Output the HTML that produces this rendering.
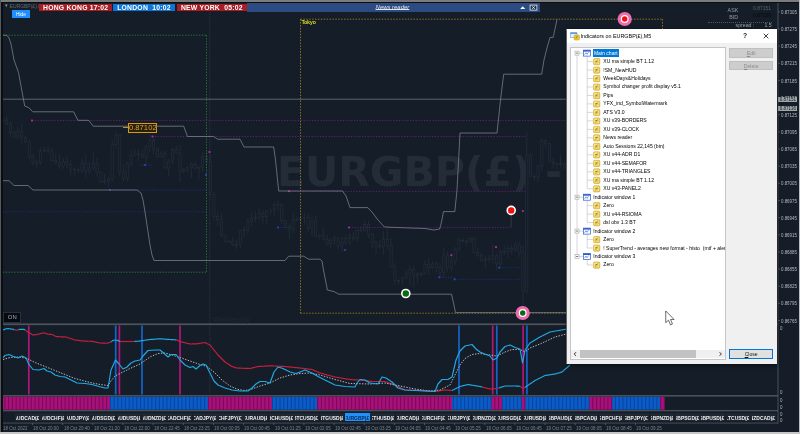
<!DOCTYPE html><html><head><meta charset="utf-8"><title>EURGBP chart</title><style>

html,body{margin:0;padding:0}
body{width:800px;height:434px;overflow:hidden;position:relative;background:#151e28;font-family:"Liberation Sans",sans-serif;color:#ccc}
.abs{position:absolute;white-space:nowrap;line-height:1}
svg.main{position:absolute;left:0;top:0}
.clock{position:absolute;top:3.7px;height:7.4px;color:#fff;font-weight:bold;font-size:6.8px;line-height:7.6px;text-align:center;white-space:pre;letter-spacing:0.22px}
.pl{position:absolute;left:780.7px;font-size:5px;transform:scaleX(0.88);transform-origin:0 0;color:#b4bac0;line-height:6px;height:6px;white-space:nowrap}
.tl{position:absolute;top:425.8px;font-size:4.8px;color:#7c848c;line-height:6px;white-space:nowrap;transform:scaleX(0.94);transform-origin:0 0}
.sym{position:absolute;top:412.8px;height:8.4px;width:24.9px;background:#1d2631;color:#f2f2f2;font-weight:bold;font-size:6.2px;line-height:9.2px;text-align:center;overflow:hidden;white-space:nowrap}
.sym i{position:absolute;left:1.2px;right:1.2px;top:0;bottom:0;overflow:hidden;font-style:normal}
.sym span{position:absolute;left:-20px;right:-20px;text-align:center;transform:scaleX(0.8)}
.dlg{position:absolute;left:567px;top:29px;width:210px;height:335px;background:#f0f0f0;box-shadow:0 1px 4px rgba(0,0,0,.6)}
.dlg .title{position:absolute;left:0;top:0;right:0;height:14.2px;background:#fff}
.tree{position:absolute;left:3px;top:18px;width:153.6px;height:310.6px;background:#fff;border:1px solid #c2c5ca;overflow:hidden}
.row{position:absolute;left:0;height:8.45px;line-height:8.45px;font-size:5.08px;color:#000;white-space:nowrap}
.btn{position:absolute;left:162.2px;width:44px;height:9.4px;font-size:5.08px;line-height:9.2px;text-align:center;box-sizing:border-box}

</style></head><body><div id="wrap" style="position:absolute;left:0;top:0;width:800px;height:434px;will-change:transform">
<svg class="main" width="800" height="434" viewBox="0 0 800 434">
<text x="277" y="186" font-family="DejaVu Sans, Liberation Sans, sans-serif" font-weight="bold" font-size="41" fill="#232c37">EURGBP(£) -</text>
<path d="M2.88 117.4V122.3" stroke="#25303c" stroke-width="0.7"/>
<rect x="1.78" y="120.0" width="2.2" height="0.9" fill="#151e28" stroke="#25303c" stroke-width="0.6"/>
<path d="M6.65 115.8V124.9" stroke="#25303c" stroke-width="0.7"/>
<rect x="5.55" y="120.0" width="2.2" height="3.6" fill="#151e28" stroke="#25303c" stroke-width="0.6"/>
<path d="M10.42 121.3V137.4" stroke="#25303c" stroke-width="0.7"/>
<rect x="9.32" y="123.5" width="2.2" height="9.2" fill="#151e28" stroke="#25303c" stroke-width="0.6"/>
<path d="M14.18 130.6V138.5" stroke="#25303c" stroke-width="0.7"/>
<rect x="13.08" y="132.7" width="2.2" height="4.5" fill="#151e28" stroke="#25303c" stroke-width="0.6"/>
<path d="M17.95 127.1V139.8" stroke="#25303c" stroke-width="0.7"/>
<rect x="16.85" y="131.1" width="2.2" height="6.2" fill="#151e28" stroke="#25303c" stroke-width="0.6"/>
<path d="M21.72 123.8V144.7" stroke="#25303c" stroke-width="0.7"/>
<rect x="20.62" y="131.1" width="2.2" height="6.2" fill="#151e28" stroke="#25303c" stroke-width="0.6"/>
<path d="M25.49 134.9V143.6" stroke="#25303c" stroke-width="0.7"/>
<rect x="24.39" y="137.2" width="2.2" height="4.6" fill="#151e28" stroke="#25303c" stroke-width="0.6"/>
<path d="M29.26 139.3V159.7" stroke="#25303c" stroke-width="0.7"/>
<rect x="28.16" y="141.9" width="2.2" height="14.8" fill="#151e28" stroke="#25303c" stroke-width="0.6"/>
<path d="M33.03 154.5V166.2" stroke="#25303c" stroke-width="0.7"/>
<rect x="31.93" y="156.6" width="2.2" height="6.4" fill="#151e28" stroke="#25303c" stroke-width="0.6"/>
<path d="M36.80 160.0V168.3" stroke="#25303c" stroke-width="0.7"/>
<rect x="35.70" y="162.7" width="2.2" height="0.8" fill="#151e28" stroke="#25303c" stroke-width="0.6"/>
<path d="M40.57 147.5V164.6" stroke="#25303c" stroke-width="0.7"/>
<rect x="39.47" y="151.0" width="2.2" height="11.7" fill="#151e28" stroke="#25303c" stroke-width="0.6"/>
<path d="M44.34 147.1V152.5" stroke="#25303c" stroke-width="0.7"/>
<rect x="43.24" y="150.1" width="2.2" height="0.9" fill="#151e28" stroke="#25303c" stroke-width="0.6"/>
<path d="M48.11 145.8V153.6" stroke="#25303c" stroke-width="0.7"/>
<rect x="47.01" y="150.1" width="2.2" height="0.9" fill="#151e28" stroke="#25303c" stroke-width="0.6"/>
<path d="M51.87 147.3V162.0" stroke="#25303c" stroke-width="0.7"/>
<rect x="50.77" y="151.0" width="2.2" height="9.5" fill="#151e28" stroke="#25303c" stroke-width="0.6"/>
<path d="M55.64 154.0V163.7" stroke="#25303c" stroke-width="0.7"/>
<rect x="54.54" y="160.5" width="2.2" height="2.5" fill="#151e28" stroke="#25303c" stroke-width="0.6"/>
<path d="M59.41 154.4V168.4" stroke="#25303c" stroke-width="0.7"/>
<rect x="58.31" y="163.0" width="2.2" height="3.6" fill="#151e28" stroke="#25303c" stroke-width="0.6"/>
<path d="M63.18 158.0V169.1" stroke="#25303c" stroke-width="0.7"/>
<rect x="62.08" y="161.7" width="2.2" height="4.8" fill="#151e28" stroke="#25303c" stroke-width="0.6"/>
<path d="M66.95 155.4V168.1" stroke="#25303c" stroke-width="0.7"/>
<rect x="65.85" y="161.7" width="2.2" height="2.5" fill="#151e28" stroke="#25303c" stroke-width="0.6"/>
<path d="M70.72 160.0V175.4" stroke="#25303c" stroke-width="0.7"/>
<rect x="69.62" y="164.3" width="2.2" height="4.9" fill="#151e28" stroke="#25303c" stroke-width="0.6"/>
<path d="M74.49 168.2V175.4" stroke="#25303c" stroke-width="0.7"/>
<rect x="73.39" y="169.2" width="2.2" height="0.8" fill="#151e28" stroke="#25303c" stroke-width="0.6"/>
<path d="M78.26 166.7V172.9" stroke="#25303c" stroke-width="0.7"/>
<rect x="77.16" y="169.7" width="2.2" height="0.9" fill="#151e28" stroke="#25303c" stroke-width="0.6"/>
<path d="M82.03 158.7V173.2" stroke="#25303c" stroke-width="0.7"/>
<rect x="80.93" y="163.1" width="2.2" height="7.5" fill="#151e28" stroke="#25303c" stroke-width="0.6"/>
<path d="M85.80 154.4V177.8" stroke="#25303c" stroke-width="0.7"/>
<rect x="84.70" y="163.1" width="2.2" height="8.4" fill="#151e28" stroke="#25303c" stroke-width="0.6"/>
<path d="M89.56 161.6V174.3" stroke="#25303c" stroke-width="0.7"/>
<rect x="88.46" y="167.8" width="2.2" height="3.7" fill="#151e28" stroke="#25303c" stroke-width="0.6"/>
<path d="M93.33 152.7V169.8" stroke="#25303c" stroke-width="0.7"/>
<rect x="92.23" y="163.3" width="2.2" height="4.6" fill="#151e28" stroke="#25303c" stroke-width="0.6"/>
<path d="M97.10 158.3V176.5" stroke="#25303c" stroke-width="0.7"/>
<rect x="96.00" y="163.3" width="2.2" height="8.8" fill="#151e28" stroke="#25303c" stroke-width="0.6"/>
<path d="M100.87 170.9V183.1" stroke="#25303c" stroke-width="0.7"/>
<rect x="99.77" y="172.1" width="2.2" height="9.6" fill="#151e28" stroke="#25303c" stroke-width="0.6"/>
<path d="M104.64 174.1V184.6" stroke="#25303c" stroke-width="0.7"/>
<rect x="103.54" y="180.9" width="2.2" height="0.8" fill="#151e28" stroke="#25303c" stroke-width="0.6"/>
<path d="M108.41 176.7V187.7" stroke="#25303c" stroke-width="0.7"/>
<rect x="107.31" y="179.4" width="2.2" height="1.5" fill="#151e28" stroke="#25303c" stroke-width="0.6"/>
<path d="M112.18 140.3V182.0" stroke="#25303c" stroke-width="0.7"/>
<rect x="111.08" y="144.6" width="2.2" height="34.8" fill="#151e28" stroke="#25303c" stroke-width="0.6"/>
<path d="M115.95 132.0V148.4" stroke="#25303c" stroke-width="0.7"/>
<rect x="114.85" y="135.1" width="2.2" height="9.5" fill="#151e28" stroke="#25303c" stroke-width="0.6"/>
<path d="M119.72 133.8V176.5" stroke="#25303c" stroke-width="0.7"/>
<rect x="118.62" y="135.1" width="2.2" height="36.9" fill="#151e28" stroke="#25303c" stroke-width="0.6"/>
<path d="M123.49 165.0V181.1" stroke="#25303c" stroke-width="0.7"/>
<rect x="122.39" y="171.9" width="2.2" height="6.5" fill="#151e28" stroke="#25303c" stroke-width="0.6"/>
<path d="M127.25 162.0V181.5" stroke="#25303c" stroke-width="0.7"/>
<rect x="126.16" y="163.8" width="2.2" height="14.6" fill="#151e28" stroke="#25303c" stroke-width="0.6"/>
<path d="M131.02 150.3V167.0" stroke="#25303c" stroke-width="0.7"/>
<rect x="129.92" y="155.4" width="2.2" height="8.4" fill="#151e28" stroke="#25303c" stroke-width="0.6"/>
<path d="M134.79 149.1V156.0" stroke="#25303c" stroke-width="0.7"/>
<rect x="133.69" y="153.7" width="2.2" height="1.7" fill="#151e28" stroke="#25303c" stroke-width="0.6"/>
<path d="M138.56 149.5V161.0" stroke="#25303c" stroke-width="0.7"/>
<rect x="137.46" y="153.7" width="2.2" height="0.9" fill="#151e28" stroke="#25303c" stroke-width="0.6"/>
<path d="M142.33 148.6V158.4" stroke="#25303c" stroke-width="0.7"/>
<rect x="141.23" y="154.6" width="2.2" height="2.7" fill="#151e28" stroke="#25303c" stroke-width="0.6"/>
<path d="M146.10 144.7V163.5" stroke="#25303c" stroke-width="0.7"/>
<rect x="145.00" y="146.4" width="2.2" height="11.0" fill="#151e28" stroke="#25303c" stroke-width="0.6"/>
<path d="M149.87 134.7V151.9" stroke="#25303c" stroke-width="0.7"/>
<rect x="148.77" y="140.2" width="2.2" height="6.1" fill="#151e28" stroke="#25303c" stroke-width="0.6"/>
<path d="M153.64 137.2V154.3" stroke="#25303c" stroke-width="0.7"/>
<rect x="152.54" y="140.2" width="2.2" height="9.1" fill="#151e28" stroke="#25303c" stroke-width="0.6"/>
<path d="M157.41 147.4V157.9" stroke="#25303c" stroke-width="0.7"/>
<rect x="156.31" y="149.3" width="2.2" height="7.5" fill="#151e28" stroke="#25303c" stroke-width="0.6"/>
<path d="M161.18 150.5V158.0" stroke="#25303c" stroke-width="0.7"/>
<rect x="160.08" y="153.3" width="2.2" height="3.5" fill="#151e28" stroke="#25303c" stroke-width="0.6"/>
<path d="M164.95 150.5V168.6" stroke="#25303c" stroke-width="0.7"/>
<rect x="163.85" y="153.3" width="2.2" height="14.7" fill="#151e28" stroke="#25303c" stroke-width="0.6"/>
<path d="M168.71 159.2V176.6" stroke="#25303c" stroke-width="0.7"/>
<rect x="167.61" y="161.9" width="2.2" height="6.1" fill="#151e28" stroke="#25303c" stroke-width="0.6"/>
<path d="M172.48 147.4V163.9" stroke="#25303c" stroke-width="0.7"/>
<rect x="171.38" y="149.6" width="2.2" height="12.3" fill="#151e28" stroke="#25303c" stroke-width="0.6"/>
<path d="M176.25 145.4V154.9" stroke="#25303c" stroke-width="0.7"/>
<rect x="175.15" y="149.6" width="2.2" height="3.5" fill="#151e28" stroke="#25303c" stroke-width="0.6"/>
<path d="M180.02 145.2V182.1" stroke="#25303c" stroke-width="0.7"/>
<rect x="178.92" y="153.1" width="2.2" height="18.3" fill="#151e28" stroke="#25303c" stroke-width="0.6"/>
<path d="M183.79 168.1V173.5" stroke="#25303c" stroke-width="0.7"/>
<rect x="182.69" y="169.6" width="2.2" height="1.8" fill="#151e28" stroke="#25303c" stroke-width="0.6"/>
<path d="M187.56 165.5V172.7" stroke="#25303c" stroke-width="0.7"/>
<rect x="186.46" y="167.8" width="2.2" height="1.8" fill="#151e28" stroke="#25303c" stroke-width="0.6"/>
<path d="M191.33 161.7V178.0" stroke="#25303c" stroke-width="0.7"/>
<rect x="190.23" y="164.3" width="2.2" height="3.5" fill="#151e28" stroke="#25303c" stroke-width="0.6"/>
<path d="M195.10 161.6V169.2" stroke="#25303c" stroke-width="0.7"/>
<rect x="194.00" y="164.3" width="2.2" height="4.0" fill="#151e28" stroke="#25303c" stroke-width="0.6"/>
<path d="M198.87 166.4V179.7" stroke="#25303c" stroke-width="0.7"/>
<rect x="197.77" y="167.2" width="2.2" height="1.1" fill="#151e28" stroke="#25303c" stroke-width="0.6"/>
<path d="M202.64 151.8V172.4" stroke="#25303c" stroke-width="0.7"/>
<rect x="201.54" y="156.4" width="2.2" height="10.8" fill="#151e28" stroke="#25303c" stroke-width="0.6"/>
<path d="M206.40 152.1V165.7" stroke="#25303c" stroke-width="0.7"/>
<rect x="205.30" y="156.4" width="2.2" height="5.4" fill="#151e28" stroke="#25303c" stroke-width="0.6"/>
<path d="M210.17 154.5V196.6" stroke="#25303c" stroke-width="0.7"/>
<rect x="209.07" y="161.8" width="2.2" height="32.9" fill="#151e28" stroke="#25303c" stroke-width="0.6"/>
<path d="M213.94 191.7V221.5" stroke="#25303c" stroke-width="0.7"/>
<rect x="212.84" y="194.7" width="2.2" height="21.9" fill="#151e28" stroke="#25303c" stroke-width="0.6"/>
<path d="M217.71 211.8V226.0" stroke="#25303c" stroke-width="0.7"/>
<rect x="216.61" y="216.6" width="2.2" height="3.1" fill="#151e28" stroke="#25303c" stroke-width="0.6"/>
<path d="M221.48 213.3V237.1" stroke="#25303c" stroke-width="0.7"/>
<rect x="220.38" y="219.7" width="2.2" height="16.1" fill="#151e28" stroke="#25303c" stroke-width="0.6"/>
<path d="M225.25 234.8V242.6" stroke="#25303c" stroke-width="0.7"/>
<rect x="224.15" y="235.9" width="2.2" height="5.4" fill="#151e28" stroke="#25303c" stroke-width="0.6"/>
<path d="M229.02 240.2V242.4" stroke="#25303c" stroke-width="0.7"/>
<rect x="227.92" y="241.3" width="2.2" height="0.8" fill="#151e28" stroke="#25303c" stroke-width="0.6"/>
<path d="M232.79 236.8V246.3" stroke="#25303c" stroke-width="0.7"/>
<rect x="231.69" y="241.5" width="2.2" height="3.1" fill="#151e28" stroke="#25303c" stroke-width="0.6"/>
<path d="M236.56 239.5V249.2" stroke="#25303c" stroke-width="0.7"/>
<rect x="235.46" y="244.6" width="2.2" height="0.8" fill="#151e28" stroke="#25303c" stroke-width="0.6"/>
<path d="M240.33 229.8V248.4" stroke="#25303c" stroke-width="0.7"/>
<rect x="239.23" y="230.8" width="2.2" height="14.2" fill="#151e28" stroke="#25303c" stroke-width="0.6"/>
<path d="M244.09 226.9V237.5" stroke="#25303c" stroke-width="0.7"/>
<rect x="242.99" y="229.9" width="2.2" height="0.9" fill="#151e28" stroke="#25303c" stroke-width="0.6"/>
<path d="M247.86 218.3V234.3" stroke="#25303c" stroke-width="0.7"/>
<rect x="246.76" y="221.2" width="2.2" height="8.7" fill="#151e28" stroke="#25303c" stroke-width="0.6"/>
<path d="M251.63 211.8V226.8" stroke="#25303c" stroke-width="0.7"/>
<rect x="250.53" y="218.1" width="2.2" height="3.1" fill="#151e28" stroke="#25303c" stroke-width="0.6"/>
<path d="M255.40 211.0V222.4" stroke="#25303c" stroke-width="0.7"/>
<rect x="254.30" y="217.4" width="2.2" height="0.8" fill="#151e28" stroke="#25303c" stroke-width="0.6"/>
<path d="M259.17 208.2V221.0" stroke="#25303c" stroke-width="0.7"/>
<rect x="258.07" y="213.2" width="2.2" height="4.2" fill="#151e28" stroke="#25303c" stroke-width="0.6"/>
<path d="M262.94 209.2V223.5" stroke="#25303c" stroke-width="0.7"/>
<rect x="261.84" y="213.2" width="2.2" height="3.5" fill="#151e28" stroke="#25303c" stroke-width="0.6"/>
<path d="M266.71 210.1V225.1" stroke="#25303c" stroke-width="0.7"/>
<rect x="265.61" y="211.3" width="2.2" height="5.4" fill="#151e28" stroke="#25303c" stroke-width="0.6"/>
<path d="M270.48 208.8V214.2" stroke="#25303c" stroke-width="0.7"/>
<rect x="269.38" y="209.7" width="2.2" height="1.6" fill="#151e28" stroke="#25303c" stroke-width="0.6"/>
<path d="M274.25 202.6V216.2" stroke="#25303c" stroke-width="0.7"/>
<rect x="273.15" y="204.7" width="2.2" height="5.0" fill="#151e28" stroke="#25303c" stroke-width="0.6"/>
<path d="M278.02 199.7V211.3" stroke="#25303c" stroke-width="0.7"/>
<rect x="276.92" y="204.7" width="2.2" height="0.8" fill="#151e28" stroke="#25303c" stroke-width="0.6"/>
<path d="M281.78 203.6V224.1" stroke="#25303c" stroke-width="0.7"/>
<rect x="280.68" y="204.9" width="2.2" height="15.8" fill="#151e28" stroke="#25303c" stroke-width="0.6"/>
<path d="M285.55 219.7V226.9" stroke="#25303c" stroke-width="0.7"/>
<rect x="284.45" y="220.7" width="2.2" height="5.2" fill="#151e28" stroke="#25303c" stroke-width="0.6"/>
<path d="M289.32 224.3V239.3" stroke="#25303c" stroke-width="0.7"/>
<rect x="288.22" y="225.9" width="2.2" height="3.7" fill="#151e28" stroke="#25303c" stroke-width="0.6"/>
<path d="M293.09 212.6V233.4" stroke="#25303c" stroke-width="0.7"/>
<rect x="291.99" y="220.6" width="2.2" height="9.0" fill="#151e28" stroke="#25303c" stroke-width="0.6"/>
<path d="M296.86 216.3V221.1" stroke="#25303c" stroke-width="0.7"/>
<rect x="295.76" y="219.2" width="2.2" height="1.3" fill="#151e28" stroke="#25303c" stroke-width="0.6"/>
<path d="M300.63 217.5V225.1" stroke="#25303c" stroke-width="0.7"/>
<rect x="299.53" y="218.3" width="2.2" height="1.0" fill="#151e28" stroke="#25303c" stroke-width="0.6"/>
<path d="M304.40 212.8V224.8" stroke="#25303c" stroke-width="0.7"/>
<rect x="303.30" y="217.4" width="2.2" height="0.9" fill="#151e28" stroke="#25303c" stroke-width="0.6"/>
<path d="M308.17 214.2V232.1" stroke="#25303c" stroke-width="0.7"/>
<rect x="307.07" y="217.4" width="2.2" height="10.6" fill="#151e28" stroke="#25303c" stroke-width="0.6"/>
<path d="M311.94 216.3V236.4" stroke="#25303c" stroke-width="0.7"/>
<rect x="310.84" y="221.1" width="2.2" height="6.9" fill="#151e28" stroke="#25303c" stroke-width="0.6"/>
<path d="M315.71 215.7V236.9" stroke="#25303c" stroke-width="0.7"/>
<rect x="314.61" y="221.1" width="2.2" height="15.2" fill="#151e28" stroke="#25303c" stroke-width="0.6"/>
<path d="M319.47 234.3V239.2" stroke="#25303c" stroke-width="0.7"/>
<rect x="318.37" y="234.9" width="2.2" height="1.4" fill="#151e28" stroke="#25303c" stroke-width="0.6"/>
<path d="M323.24 227.2V240.1" stroke="#25303c" stroke-width="0.7"/>
<rect x="322.14" y="234.9" width="2.2" height="4.5" fill="#151e28" stroke="#25303c" stroke-width="0.6"/>
<path d="M327.01 234.9V245.2" stroke="#25303c" stroke-width="0.7"/>
<rect x="325.91" y="239.4" width="2.2" height="4.5" fill="#151e28" stroke="#25303c" stroke-width="0.6"/>
<path d="M330.78 237.6V248.7" stroke="#25303c" stroke-width="0.7"/>
<rect x="329.68" y="240.4" width="2.2" height="3.5" fill="#151e28" stroke="#25303c" stroke-width="0.6"/>
<path d="M334.55 235.0V244.9" stroke="#25303c" stroke-width="0.7"/>
<rect x="333.45" y="237.9" width="2.2" height="2.5" fill="#151e28" stroke="#25303c" stroke-width="0.6"/>
<path d="M338.32 237.3V249.0" stroke="#25303c" stroke-width="0.7"/>
<rect x="337.22" y="237.9" width="2.2" height="7.4" fill="#151e28" stroke="#25303c" stroke-width="0.6"/>
<path d="M342.09 236.9V252.0" stroke="#25303c" stroke-width="0.7"/>
<rect x="340.99" y="242.2" width="2.2" height="3.1" fill="#151e28" stroke="#25303c" stroke-width="0.6"/>
<path d="M345.86 234.4V244.9" stroke="#25303c" stroke-width="0.7"/>
<rect x="344.76" y="238.6" width="2.2" height="3.6" fill="#151e28" stroke="#25303c" stroke-width="0.6"/>
<path d="M349.63 233.3V245.2" stroke="#25303c" stroke-width="0.7"/>
<rect x="348.53" y="236.9" width="2.2" height="1.7" fill="#151e28" stroke="#25303c" stroke-width="0.6"/>
<path d="M353.40 231.7V240.9" stroke="#25303c" stroke-width="0.7"/>
<rect x="352.30" y="236.9" width="2.2" height="2.0" fill="#151e28" stroke="#25303c" stroke-width="0.6"/>
<path d="M357.16 228.5V242.0" stroke="#25303c" stroke-width="0.7"/>
<rect x="356.06" y="230.3" width="2.2" height="8.6" fill="#151e28" stroke="#25303c" stroke-width="0.6"/>
<path d="M360.93 226.7V231.9" stroke="#25303c" stroke-width="0.7"/>
<rect x="359.83" y="230.1" width="2.2" height="0.8" fill="#151e28" stroke="#25303c" stroke-width="0.6"/>
<path d="M364.70 220.6V231.7" stroke="#25303c" stroke-width="0.7"/>
<rect x="363.60" y="224.6" width="2.2" height="5.5" fill="#151e28" stroke="#25303c" stroke-width="0.6"/>
<path d="M368.47 220.9V237.9" stroke="#25303c" stroke-width="0.7"/>
<rect x="367.37" y="224.6" width="2.2" height="9.8" fill="#151e28" stroke="#25303c" stroke-width="0.6"/>
<path d="M372.24 232.6V248.4" stroke="#25303c" stroke-width="0.7"/>
<rect x="371.14" y="234.4" width="2.2" height="8.2" fill="#151e28" stroke="#25303c" stroke-width="0.6"/>
<path d="M376.01 240.2V254.5" stroke="#25303c" stroke-width="0.7"/>
<rect x="374.91" y="242.5" width="2.2" height="3.1" fill="#151e28" stroke="#25303c" stroke-width="0.6"/>
<path d="M379.78 239.9V248.6" stroke="#25303c" stroke-width="0.7"/>
<rect x="378.68" y="245.7" width="2.2" height="1.2" fill="#151e28" stroke="#25303c" stroke-width="0.6"/>
<path d="M383.55 231.1V254.4" stroke="#25303c" stroke-width="0.7"/>
<rect x="382.45" y="239.4" width="2.2" height="7.5" fill="#151e28" stroke="#25303c" stroke-width="0.6"/>
<path d="M387.32 229.2V249.7" stroke="#25303c" stroke-width="0.7"/>
<rect x="386.22" y="239.4" width="2.2" height="6.1" fill="#151e28" stroke="#25303c" stroke-width="0.6"/>
<path d="M391.09 237.5V267.7" stroke="#25303c" stroke-width="0.7"/>
<rect x="389.99" y="245.5" width="2.2" height="21.2" fill="#151e28" stroke="#25303c" stroke-width="0.6"/>
<path d="M394.85 262.6V284.6" stroke="#25303c" stroke-width="0.7"/>
<rect x="393.75" y="266.7" width="2.2" height="13.8" fill="#151e28" stroke="#25303c" stroke-width="0.6"/>
<path d="M398.62 278.7V284.3" stroke="#25303c" stroke-width="0.7"/>
<rect x="397.52" y="280.4" width="2.2" height="0.8" fill="#151e28" stroke="#25303c" stroke-width="0.6"/>
<path d="M402.39 276.7V284.9" stroke="#25303c" stroke-width="0.7"/>
<rect x="401.29" y="278.0" width="2.2" height="2.4" fill="#151e28" stroke="#25303c" stroke-width="0.6"/>
<path d="M406.16 269.7V278.9" stroke="#25303c" stroke-width="0.7"/>
<rect x="405.06" y="273.8" width="2.2" height="4.2" fill="#151e28" stroke="#25303c" stroke-width="0.6"/>
<path d="M409.93 265.2V285.0" stroke="#25303c" stroke-width="0.7"/>
<rect x="408.83" y="269.1" width="2.2" height="4.7" fill="#151e28" stroke="#25303c" stroke-width="0.6"/>
<path d="M413.70 266.0V286.9" stroke="#25303c" stroke-width="0.7"/>
<rect x="412.60" y="269.1" width="2.2" height="6.9" fill="#151e28" stroke="#25303c" stroke-width="0.6"/>
<path d="M417.47 271.8V283.2" stroke="#25303c" stroke-width="0.7"/>
<rect x="416.37" y="274.2" width="2.2" height="1.8" fill="#151e28" stroke="#25303c" stroke-width="0.6"/>
<path d="M421.24 272.5V276.8" stroke="#25303c" stroke-width="0.7"/>
<rect x="420.14" y="273.2" width="2.2" height="0.9" fill="#151e28" stroke="#25303c" stroke-width="0.6"/>
<path d="M425.01 259.6V275.0" stroke="#25303c" stroke-width="0.7"/>
<rect x="423.91" y="264.2" width="2.2" height="9.1" fill="#151e28" stroke="#25303c" stroke-width="0.6"/>
<path d="M428.78 258.4V275.5" stroke="#25303c" stroke-width="0.7"/>
<rect x="427.68" y="264.2" width="2.2" height="3.6" fill="#151e28" stroke="#25303c" stroke-width="0.6"/>
<path d="M432.54 260.7V269.5" stroke="#25303c" stroke-width="0.7"/>
<rect x="431.44" y="263.8" width="2.2" height="4.0" fill="#151e28" stroke="#25303c" stroke-width="0.6"/>
<path d="M436.31 261.7V271.9" stroke="#25303c" stroke-width="0.7"/>
<rect x="435.21" y="263.8" width="2.2" height="3.7" fill="#151e28" stroke="#25303c" stroke-width="0.6"/>
<path d="M440.08 262.8V277.6" stroke="#25303c" stroke-width="0.7"/>
<rect x="438.98" y="267.5" width="2.2" height="4.8" fill="#151e28" stroke="#25303c" stroke-width="0.6"/>
<path d="M443.85 247.6V276.8" stroke="#25303c" stroke-width="0.7"/>
<rect x="442.75" y="254.9" width="2.2" height="17.4" fill="#151e28" stroke="#25303c" stroke-width="0.6"/>
<path d="M447.62 251.2V272.0" stroke="#25303c" stroke-width="0.7"/>
<rect x="446.52" y="254.9" width="2.2" height="13.1" fill="#151e28" stroke="#25303c" stroke-width="0.6"/>
<path d="M451.39 252.6V271.5" stroke="#25303c" stroke-width="0.7"/>
<rect x="450.29" y="261.7" width="2.2" height="6.3" fill="#151e28" stroke="#25303c" stroke-width="0.6"/>
<path d="M455.16 246.8V265.2" stroke="#25303c" stroke-width="0.7"/>
<rect x="454.06" y="249.4" width="2.2" height="12.3" fill="#151e28" stroke="#25303c" stroke-width="0.6"/>
<path d="M458.93 237.8V251.4" stroke="#25303c" stroke-width="0.7"/>
<rect x="457.83" y="240.1" width="2.2" height="9.3" fill="#151e28" stroke="#25303c" stroke-width="0.6"/>
<path d="M462.70 238.8V242.6" stroke="#25303c" stroke-width="0.7"/>
<rect x="461.60" y="240.1" width="2.2" height="0.8" fill="#151e28" stroke="#25303c" stroke-width="0.6"/>
<path d="M466.47 240.1V245.9" stroke="#25303c" stroke-width="0.7"/>
<rect x="465.37" y="240.8" width="2.2" height="1.3" fill="#151e28" stroke="#25303c" stroke-width="0.6"/>
<path d="M470.23 238.0V243.0" stroke="#25303c" stroke-width="0.7"/>
<rect x="469.13" y="238.5" width="2.2" height="3.5" fill="#151e28" stroke="#25303c" stroke-width="0.6"/>
<path d="M474.00 238.0V253.8" stroke="#25303c" stroke-width="0.7"/>
<rect x="472.90" y="238.5" width="2.2" height="14.0" fill="#151e28" stroke="#25303c" stroke-width="0.6"/>
<path d="M477.77 247.0V257.5" stroke="#25303c" stroke-width="0.7"/>
<rect x="476.67" y="252.6" width="2.2" height="2.8" fill="#151e28" stroke="#25303c" stroke-width="0.6"/>
<path d="M481.54 253.1V261.9" stroke="#25303c" stroke-width="0.7"/>
<rect x="480.44" y="255.4" width="2.2" height="5.3" fill="#151e28" stroke="#25303c" stroke-width="0.6"/>
<path d="M485.31 255.3V268.7" stroke="#25303c" stroke-width="0.7"/>
<rect x="484.21" y="259.6" width="2.2" height="1.0" fill="#151e28" stroke="#25303c" stroke-width="0.6"/>
<path d="M489.08 254.8V263.1" stroke="#25303c" stroke-width="0.7"/>
<rect x="487.98" y="259.0" width="2.2" height="0.8" fill="#151e28" stroke="#25303c" stroke-width="0.6"/>
<path d="M492.85 244.8V263.7" stroke="#25303c" stroke-width="0.7"/>
<rect x="491.75" y="255.8" width="2.2" height="3.2" fill="#151e28" stroke="#25303c" stroke-width="0.6"/>
<path d="M496.62 253.7V269.9" stroke="#25303c" stroke-width="0.7"/>
<rect x="495.52" y="255.8" width="2.2" height="8.1" fill="#151e28" stroke="#25303c" stroke-width="0.6"/>
<path d="M500.39 249.4V266.4" stroke="#25303c" stroke-width="0.7"/>
<rect x="499.29" y="251.9" width="2.2" height="12.0" fill="#151e28" stroke="#25303c" stroke-width="0.6"/>
<path d="M504.16 245.0V255.3" stroke="#25303c" stroke-width="0.7"/>
<rect x="503.06" y="251.5" width="2.2" height="0.8" fill="#151e28" stroke="#25303c" stroke-width="0.6"/>
<path d="M507.92 245.6V258.6" stroke="#25303c" stroke-width="0.7"/>
<rect x="506.82" y="248.5" width="2.2" height="3.0" fill="#151e28" stroke="#25303c" stroke-width="0.6"/>
<path d="M511.69 243.9V254.9" stroke="#25303c" stroke-width="0.7"/>
<rect x="510.59" y="248.5" width="2.2" height="1.6" fill="#151e28" stroke="#25303c" stroke-width="0.6"/>
<path d="M515.46 241.5V251.7" stroke="#25303c" stroke-width="0.7"/>
<rect x="514.36" y="244.9" width="2.2" height="5.1" fill="#151e28" stroke="#25303c" stroke-width="0.6"/>
<path d="M519.23 242.1V257.1" stroke="#25303c" stroke-width="0.7"/>
<rect x="518.13" y="244.9" width="2.2" height="8.0" fill="#151e28" stroke="#25303c" stroke-width="0.6"/>
<path d="M523.00 246.0V313.0" stroke="#25303c" stroke-width="0.7"/>
<rect x="521.90" y="252.0" width="2.2" height="39.0" fill="#151e28" stroke="#25303c" stroke-width="0.6"/>
<path d="M526.77 131.0V293.0" stroke="#25303c" stroke-width="0.7"/>
<rect x="525.67" y="155.0" width="2.2" height="136.0" fill="#151e28" stroke="#25303c" stroke-width="0.6"/>
<path d="M530.54 153.6V177.2" stroke="#25303c" stroke-width="0.7"/>
<rect x="529.44" y="155.0" width="2.2" height="21.3" fill="#151e28" stroke="#25303c" stroke-width="0.6"/>
<path d="M534.31 174.4V181.1" stroke="#25303c" stroke-width="0.7"/>
<rect x="533.21" y="176.3" width="2.2" height="0.8" fill="#151e28" stroke="#25303c" stroke-width="0.6"/>
<path d="M538.08 165.4V182.2" stroke="#25303c" stroke-width="0.7"/>
<rect x="536.98" y="166.0" width="2.2" height="11.1" fill="#151e28" stroke="#25303c" stroke-width="0.6"/>
<path d="M541.85 138.6V171.0" stroke="#25303c" stroke-width="0.7"/>
<rect x="540.75" y="140.6" width="2.2" height="25.4" fill="#151e28" stroke="#25303c" stroke-width="0.6"/>
<path d="M545.61 140.0V147.7" stroke="#25303c" stroke-width="0.7"/>
<rect x="544.51" y="140.6" width="2.2" height="3.2" fill="#151e28" stroke="#25303c" stroke-width="0.6"/>
<path d="M549.38 142.4V162.0" stroke="#25303c" stroke-width="0.7"/>
<rect x="548.28" y="143.7" width="2.2" height="17.6" fill="#151e28" stroke="#25303c" stroke-width="0.6"/>
<path d="M553.15 158.1V168.4" stroke="#25303c" stroke-width="0.7"/>
<rect x="552.05" y="161.3" width="2.2" height="2.4" fill="#151e28" stroke="#25303c" stroke-width="0.6"/>
<path d="M556.92 163.2V170.1" stroke="#25303c" stroke-width="0.7"/>
<rect x="555.82" y="163.7" width="2.2" height="0.8" fill="#151e28" stroke="#25303c" stroke-width="0.6"/>
<path d="M560.69 155.2V167.7" stroke="#25303c" stroke-width="0.7"/>
<rect x="559.59" y="163.8" width="2.2" height="0.8" fill="#151e28" stroke="#25303c" stroke-width="0.6"/>
<path d="M564.46 161.7V168.7" stroke="#25303c" stroke-width="0.7"/>
<rect x="563.36" y="164.5" width="2.2" height="3.5" fill="#151e28" stroke="#25303c" stroke-width="0.6"/>
<line x1="209.8" y1="3" x2="209.8" y2="394" stroke="#33414f" stroke-width="0.8" stroke-dasharray="1 1.2"/>
<line x1="3" y1="35.2" x2="206.5" y2="35.2" stroke="#2c8a3c" stroke-width="0.75" stroke-dasharray="1.4 1.4"/>
<line x1="206.5" y1="35.2" x2="206.5" y2="272.2" stroke="#2c8a3c" stroke-width="0.75" stroke-dasharray="1.4 1.4"/>
<line x1="3" y1="272.2" x2="206.5" y2="272.2" stroke="#2c8a3c" stroke-width="0.75" stroke-dasharray="1.4 1.4"/>
<line x1="300.5" y1="19.2" x2="662.5" y2="19.2" stroke="#b88a1c" stroke-width="0.75" stroke-dasharray="1.5 1.4"/>
<line x1="300.5" y1="19.2" x2="300.5" y2="313.2" stroke="#b88a1c" stroke-width="0.75" stroke-dasharray="1.5 1.4"/>
<line x1="300.5" y1="313.2" x2="566" y2="313.2" stroke="#b88a1c" stroke-width="0.75" stroke-dasharray="1.5 1.4"/>
<line x1="662.5" y1="19.2" x2="662.5" y2="30" stroke="#b88a1c" stroke-width="0.75" stroke-dasharray="1.5 1.4"/>
<line x1="32" y1="120.5" x2="566" y2="120.5" stroke="#681c72" stroke-width="0.9" stroke-dasharray="1.3 1.5"/>
<line x1="152" y1="136.5" x2="525.3" y2="136.5" stroke="#681c72" stroke-width="0.9" stroke-dasharray="1.3 1.5"/>
<line x1="289" y1="191.4" x2="525" y2="191.4" stroke="#681c72" stroke-width="0.9" stroke-dasharray="1.3 1.5"/>
<line x1="349" y1="227.6" x2="511" y2="227.6" stroke="#681c72" stroke-width="0.9" stroke-dasharray="1.3 1.5"/>
<rect x="31.1" y="119.6" width="1.8" height="1.8" fill="#c028a8"/>
<rect x="151.6" y="135.6" width="1.8" height="1.8" fill="#c028a8"/>
<rect x="288.1" y="190.29999999999998" width="1.8" height="1.8" fill="#c028a8"/>
<rect x="348.1" y="226.6" width="1.8" height="1.8" fill="#c028a8"/>
<rect x="208.6" y="151.1" width="1.8" height="1.8" fill="#c028a8"/>
<rect x="450.40000000000003" y="254.29999999999998" width="1.8" height="1.8" fill="#c028a8"/>
<rect x="495.1" y="246.1" width="1.8" height="1.8" fill="#c028a8"/>
<rect x="521.9" y="210.1" width="1.8" height="1.8" fill="#c028a8"/>
<line x1="3" y1="211.8" x2="206" y2="211.8" stroke="#1b327c" stroke-width="0.9" stroke-dasharray="1.3 1.5"/>
<line x1="110" y1="190" x2="206" y2="190" stroke="#1b327c" stroke-width="0.9" stroke-dasharray="1.3 1.5"/>
<line x1="140" y1="165" x2="152" y2="165" stroke="#1b327c" stroke-width="0.9" stroke-dasharray="1.3 1.5"/>
<line x1="278" y1="227.5" x2="292" y2="227.5" stroke="#1b327c" stroke-width="0.9" stroke-dasharray="1.3 1.5"/>
<line x1="439.4" y1="277.3" x2="454" y2="277.3" stroke="#1b327c" stroke-width="0.9" stroke-dasharray="1.3 1.5"/>
<line x1="454.6" y1="279.3" x2="522" y2="279.3" stroke="#1b327c" stroke-width="0.9" stroke-dasharray="1.3 1.5"/>
<line x1="499.3" y1="267.7" x2="522" y2="267.7" stroke="#1b327c" stroke-width="0.9" stroke-dasharray="1.3 1.5"/>
<rect x="109.1" y="189.1" width="1.8" height="1.8" fill="#2848b8"/>
<rect x="144.1" y="164.1" width="1.8" height="1.8" fill="#2848b8"/>
<rect x="205.1" y="174.1" width="1.8" height="1.8" fill="#2848b8"/>
<rect x="277.1" y="226.6" width="1.8" height="1.8" fill="#2848b8"/>
<rect x="344.1" y="249.1" width="1.8" height="1.8" fill="#2848b8"/>
<rect x="438.5" y="276.40000000000003" width="1.8" height="1.8" fill="#2848b8"/>
<rect x="453.70000000000005" y="278.40000000000003" width="1.8" height="1.8" fill="#2848b8"/>
<rect x="498.40000000000003" y="266.8" width="1.8" height="1.8" fill="#2848b8"/>
<line x1="3" y1="99.2" x2="566" y2="99.2" stroke="#737b83" stroke-width="0.75"/>
<polyline points="3.0,35.0 7.0,35.5 9.0,38.0 11.0,44.0 14.0,60.0 18.5,72.5 24.7,106.0 28.8,107.6 32.7,111.8 73.7,111.8 77.9,120.3 88.7,120.3 93.3,126.2 183.7,126.2 187.5,136.5 213.7,136.5 217.5,139.2 240.0,139.2 244.0,147.0 273.7,147.0 275.5,160.0 278.7,191.0 342.5,191.0 346.0,196.0 350.0,207.6 367.7,207.6 372.0,212.0 378.0,220.0 384.5,227.0 411.0,228.0 425.0,228.5 434.0,230.0 439.7,229.0 441.5,222.0 443.5,211.6 454.8,211.6 457.0,190.0 460.0,133.0 497.0,133.0 500.5,100.0 503.7,74.2 541.7,74.2 544.0,60.0 547.0,48.0 550.0,37.4 553.2,37.4 557.0,19.5" fill="none" stroke="#828a91" stroke-width="0.72" stroke-linejoin="round" />
<polyline points="3.0,180.7 9.0,180.7 14.0,185.5 28.0,185.5 33.0,190.0 137.0,190.0 141.0,193.0 143.0,200.0 145.0,212.0 150.0,245.0 152.0,255.0 154.0,260.5 285.0,260.5 288.7,256.2 303.7,256.2 308.7,259.2 320.0,259.2 322.0,261.0 323.5,270.0 327.4,290.0 334.0,291.6 338.7,294.2 451.6,294.2 453.5,303.0 455.5,312.6 566.0,312.6" fill="none" stroke="#828a91" stroke-width="0.72" stroke-linejoin="round" />
<circle cx="624.7" cy="19" r="7.1" fill="#f06cb0"/>
<circle cx="624.7" cy="19" r="3.9" fill="#ffffff"/>
<circle cx="624.7" cy="19" r="2.7" fill="#f01010"/>
<line x1="511.2" y1="214" x2="511.2" y2="227.5" stroke="#3a444e" stroke-width="0.7"/>
<circle cx="511.2" cy="210.4" r="4.8" fill="#ffffff"/>
<circle cx="511.2" cy="210.4" r="3.2" fill="#ee1111"/>
<circle cx="405.8" cy="293.5" r="4.8" fill="#ffffff"/>
<circle cx="405.8" cy="293.5" r="3.2" fill="#0a6a12"/>
<circle cx="522.7" cy="313" r="7.1" fill="#f06cb0"/>
<circle cx="522.7" cy="313" r="3.9" fill="#ffffff"/>
<circle cx="522.7" cy="313" r="2.7" fill="#0a6a12"/>
<line x1="28.8" y1="325.5" x2="28.8" y2="394.5" stroke="#b0167c" stroke-width="1.7"/>
<line x1="119.4" y1="325.5" x2="119.4" y2="394.5" stroke="#b0167c" stroke-width="1.7"/>
<line x1="180" y1="325.5" x2="180" y2="394.5" stroke="#b0167c" stroke-width="1.7"/>
<line x1="492.7" y1="325.5" x2="492.7" y2="394.5" stroke="#b0167c" stroke-width="1.7"/>
<line x1="523.1" y1="325.5" x2="523.1" y2="394.5" stroke="#b0167c" stroke-width="1.7"/>
<line x1="115.7" y1="325.5" x2="115.7" y2="394.5" stroke="#1565c8" stroke-width="1.7"/>
<line x1="142" y1="325.5" x2="142" y2="394.5" stroke="#1565c8" stroke-width="1.7"/>
<line x1="459" y1="325.5" x2="459" y2="394.5" stroke="#1565c8" stroke-width="1.7"/>
<line x1="496.8" y1="325.5" x2="496.8" y2="394.5" stroke="#1565c8" stroke-width="1.7"/>
<line x1="526.9" y1="325.5" x2="526.9" y2="394.5" stroke="#1565c8" stroke-width="1.7"/>
<polyline points="3.0,330.0 3.5,329.8 4.0,329.6 4.5,329.4 5.0,329.2 5.5,329.0 6.0,328.9 6.5,328.8 7.0,328.7 7.5,328.6 8.0,328.5 8.5,328.6 9.0,328.7 9.5,328.7 10.0,328.8 10.5,328.9 11.0,329.0 11.5,329.1 12.0,329.1 12.5,329.2 13.0,329.3 13.5,329.4 14.0,329.6 14.5,329.7" fill="none" stroke="#20aae6" stroke-width="1.15" stroke-linejoin="round" />
<polyline points="14.5,329.7 15.0,329.8 15.5,329.9 16.0,330.1 16.5,330.2 17.0,330.3 17.5,330.1 18.0,329.9 18.5,329.7" fill="none" stroke="#c81e3c" stroke-width="1.15" stroke-linejoin="round" />
<polyline points="18.5,329.7 19.0,329.5 19.5,329.3 20.0,329.3 20.5,329.3 21.0,329.3 21.5,329.3 22.0,329.3 22.5,329.3 23.0,329.3 23.5,329.3 24.0,329.3 24.5,329.6 25.0,330.0" fill="none" stroke="#20aae6" stroke-width="1.15" stroke-linejoin="round" />
<polyline points="25.0,330.0 25.5,330.3 26.0,330.6 26.5,331.0 27.0,331.3 27.5,331.7 28.0,332.0 28.5,332.3 29.0,332.6 29.5,332.9 30.0,333.2 30.5,333.5 31.0,333.8 31.5,334.1 32.0,334.4 32.5,334.7 33.0,335.0 33.5,334.9 34.0,334.9 34.5,334.8 35.0,334.8 35.5,334.7 36.0,334.6 36.5,334.6 37.0,334.5 37.5,334.4 38.0,334.3 38.5,334.1 39.0,334.0 39.5,333.9 40.0,333.8 40.5,333.6 41.0,333.5 41.5,333.4 42.0,333.3 42.5,333.2 43.0,333.0 43.5,332.9 44.0,332.8 44.5,333.0 45.0,333.1 45.5,333.3 46.0,333.5 46.5,333.7 47.0,333.9 47.5,334.0 48.0,334.2 48.5,334.2 49.0,334.3 49.5,334.3 50.0,334.4 50.5,334.4 51.0,334.4 51.5,334.5 52.0,334.5 52.5,334.8 53.0,335.0 53.5,335.2 54.0,335.5 54.5,335.8 55.0,336.0 55.5,336.2 56.0,336.5 56.5,336.5 57.0,336.6 57.5,336.6 58.0,336.6 58.5,336.6 59.0,336.6 59.5,336.7 60.0,336.7 60.5,336.7 61.0,336.8 61.5,336.8 62.0,336.8 62.5,336.8 63.0,336.9 63.5,336.9 64.0,336.9 64.5,336.9 65.0,336.9 65.5,337.0 66.0,337.0 66.5,337.2 67.0,337.3 67.5,337.5 68.0,337.7 68.5,337.8 69.0,338.0 69.5,338.2 70.0,338.3 70.5,338.5 71.0,338.7 71.5,338.8 72.0,339.0 72.5,339.2 73.0,339.3 73.5,339.5 74.0,339.7 74.5,339.8 75.0,340.0 75.5,340.1 76.0,340.1 76.5,340.2 77.0,340.2 77.5,340.3 78.0,340.4 78.5,340.4 79.0,340.5 79.5,340.6 80.0,340.6 80.5,340.7 81.0,340.8 81.5,340.8 82.0,340.9 82.5,340.9 83.0,341.0 83.5,341.0 84.0,341.0 84.5,341.1 85.0,341.1 85.5,341.1 86.0,341.1 86.5,341.1 87.0,341.1 87.5,341.1 88.0,341.2 88.5,341.2 89.0,341.2 89.5,341.2 90.0,341.2 90.5,341.2 91.0,341.3 91.5,341.3 92.0,341.3 92.5,341.4 93.0,341.5 93.5,341.6 94.0,341.7 94.5,341.8 95.0,341.9 95.5,342.0 96.0,342.1 96.5,342.3 97.0,342.4 97.5,342.5 98.0,342.6 98.5,342.7 99.0,342.8 99.5,342.9 100.0,343.0 100.5,343.0 101.0,343.0 101.5,343.0 102.0,343.1 102.5,343.1 103.0,343.1 103.5,343.1 104.0,343.1 104.5,343.1 105.0,343.1 105.5,343.2 106.0,343.2 106.5,343.2 107.0,343.2 107.5,343.1 108.0,342.9 108.5,342.8 109.0,342.6 109.5,342.4 110.0,342.3 110.5,342.1 111.0,342.0" fill="none" stroke="#c81e3c" stroke-width="1.15" stroke-linejoin="round" />
<polyline points="111.0,342.0 111.5,341.6 112.0,341.1 112.5,340.6 113.0,340.2 113.5,340.2 114.0,340.2 114.5,340.2 115.0,340.2 115.5,340.2 116.0,340.2 116.5,340.2 117.0,340.2 117.5,340.4 118.0,340.6 118.5,340.9 119.0,341.1 119.5,341.3 120.0,341.5" fill="none" stroke="#20aae6" stroke-width="1.15" stroke-linejoin="round" />
<polyline points="120.0,341.5 120.5,341.5 121.0,341.5 121.5,341.5 122.0,341.5 122.5,341.5 123.0,341.5 123.5,341.5 124.0,341.5 124.5,341.5 125.0,341.5 125.5,341.5 126.0,341.5 126.5,341.5 127.0,341.5 127.5,341.5 128.0,341.5 128.5,341.5 129.0,341.5 129.5,341.5 130.0,341.5 130.5,341.5 131.0,341.5 131.5,341.5 132.0,341.5 132.5,341.5 133.0,341.5 133.5,341.5 134.0,341.5 134.5,341.5" fill="none" stroke="#c81e3c" stroke-width="1.15" stroke-linejoin="round" />
<polyline points="134.5,341.5 135.0,341.4 135.5,341.4 136.0,341.3 136.5,341.3 137.0,341.2 137.5,341.2 138.0,341.2 138.5,341.1 139.0,341.1 139.5,341.0 140.0,341.0 140.5,340.9 141.0,340.9 141.5,340.8 142.0,340.7 142.5,340.6 143.0,340.6 143.5,340.5 144.0,340.4 144.5,340.3 145.0,340.2 145.5,340.2 146.0,340.1 146.5,340.0 147.0,339.9 147.5,339.9 148.0,339.8 148.5,339.7 149.0,339.6 149.5,339.6 150.0,339.5 150.5,339.5 151.0,339.4 151.5,339.4 152.0,339.4 152.5,339.3 153.0,339.3 153.5,339.3 154.0,339.2 154.5,339.2 155.0,339.1 155.5,339.1 156.0,339.1 156.5,339.0 157.0,339.0 157.5,339.0 158.0,338.9 158.5,338.9 159.0,338.9 159.5,338.8 160.0,338.8 160.5,338.8 161.0,338.9 161.5,338.9 162.0,338.9 162.5,339.0 163.0,339.0 163.5,339.0 164.0,339.1 164.5,339.1 165.0,339.1 165.5,339.2 166.0,339.2 166.5,339.3 167.0,339.3 167.5,339.3 168.0,339.4 168.5,339.4 169.0,339.4 169.5,339.5 170.0,339.5 170.5,339.5 171.0,339.6 171.5,339.6 172.0,339.6 172.5,339.6 173.0,339.6 173.5,339.7 174.0,339.7 174.5,339.7 175.0,339.8 175.5,339.8 176.0,339.8 176.5,340.0" fill="none" stroke="#20aae6" stroke-width="1.15" stroke-linejoin="round" />
<polyline points="176.5,340.0 177.0,340.2 177.5,340.4 178.0,340.6 178.5,340.9 179.0,341.1 179.5,341.3 180.0,341.5 180.5,341.6 181.0,341.8 181.5,341.9 182.0,342.0 182.5,342.1 183.0,342.2 183.5,342.4 184.0,342.5 184.5,342.6 185.0,342.8 185.5,342.9 186.0,343.0 186.5,343.1 187.0,343.2 187.5,343.4 188.0,343.5 188.5,343.6 189.0,343.8 189.5,343.9 190.0,344.0 190.5,344.0 191.0,344.0 191.5,344.0 192.0,343.9 192.5,343.9 193.0,343.9 193.5,343.9 194.0,343.9 194.5,343.9 195.0,343.9 195.5,343.8 196.0,343.8 196.5,343.8 197.0,343.8 197.5,343.7 198.0,343.6 198.5,343.6 199.0,343.5 199.5,343.4 200.0,343.3 200.5,343.2 201.0,343.1 201.5,343.1 202.0,343.0 202.5,342.9 203.0,342.8 203.5,342.7 204.0,342.7 204.5,342.6 205.0,342.5 205.5,342.8 206.0,343.0 206.5,343.2 207.0,343.5 207.5,343.8 208.0,344.0 208.5,344.2 209.0,344.5 209.5,344.8 210.0,345.0 210.5,345.6 211.0,346.2 211.5,346.9 212.0,347.5 212.5,348.1 213.0,348.8 213.5,349.4 214.0,350.0 214.5,350.6 215.0,351.2 215.5,351.9 216.0,352.5 216.5,353.1 217.0,353.8 217.5,354.4 218.0,355.0 218.5,355.5 219.0,356.0 219.5,356.5 220.0,357.0 220.5,357.5 221.0,358.0 221.5,358.5 222.0,359.0 222.5,359.5 223.0,360.0 223.5,360.5 224.0,361.0 224.5,361.5 225.0,362.0 225.5,362.3 226.0,362.6 226.5,363.0 227.0,363.3 227.5,363.6 228.0,363.9 228.5,364.2 229.0,364.6 229.5,364.9 230.0,365.2 230.5,365.5 231.0,365.9 231.5,366.2 232.0,366.5 232.5,366.6 233.0,366.8 233.5,366.9 234.0,367.1 234.5,367.2 235.0,367.4 235.5,367.6 236.0,367.7 236.5,367.9 237.0,368.0 237.5,368.0 238.0,368.0 238.5,368.1 239.0,368.1 239.5,368.1 240.0,368.1 240.5,368.1 241.0,368.2 241.5,368.2 242.0,368.2 242.5,368.2 243.0,368.2 243.5,368.2 244.0,368.3 244.5,368.3 245.0,368.3 245.5,368.3 246.0,368.3 246.5,368.4 247.0,368.4 247.5,368.4 248.0,368.4 248.5,368.4 249.0,368.5 249.5,368.5 250.0,368.5 250.5,368.4 251.0,368.2 251.5,368.1 252.0,368.0 252.5,367.9 253.0,367.8 253.5,367.6 254.0,367.5 254.5,367.4 255.0,367.2 255.5,367.1 256.0,367.0 256.5,366.9 257.0,366.8 257.5,366.6 258.0,366.5 258.5,366.5 259.0,366.4 259.5,366.4 260.0,366.4 260.5,366.4 261.0,366.3 261.5,366.3 262.0,366.3 262.5,366.2 263.0,366.2 263.5,366.2 264.0,366.1 264.5,366.1 265.0,366.1 265.5,366.1 266.0,366.0 266.5,366.0 267.0,366.0 267.5,365.9 268.0,365.9 268.5,365.9 269.0,365.9 269.5,365.8 270.0,365.8 270.5,365.8 271.0,365.8 271.5,365.9 272.0,365.9 272.5,365.9 273.0,365.9 273.5,366.0 274.0,366.0 274.5,366.0 275.0,366.0 275.5,366.1 276.0,366.1 276.5,366.1 277.0,366.1 277.5,366.1 278.0,366.2 278.5,366.2 279.0,366.2 279.5,366.2 280.0,366.3 280.5,366.3 281.0,366.3 281.5,366.3 282.0,366.4 282.5,366.4 283.0,366.4 283.5,366.4 284.0,366.5 284.5,366.5 285.0,366.5 285.5,366.6 286.0,366.6 286.5,366.6 287.0,366.7 287.5,366.8 288.0,366.8 288.5,366.9 289.0,366.9 289.5,366.9 290.0,367.0 290.5,367.1 291.0,367.1 291.5,367.1 292.0,367.2 292.5,367.2 293.0,367.3 293.5,367.4 294.0,367.4 294.5,367.4 295.0,367.5 295.5,367.6 296.0,367.6 296.5,367.6 297.0,367.7 297.5,367.8 298.0,367.8 298.5,367.9 299.0,367.9 299.5,367.9 300.0,368.0 300.5,368.1 301.0,368.1 301.5,368.2 302.0,368.2 302.5,368.3 303.0,368.4 303.5,368.4 304.0,368.5 304.5,368.6 305.0,368.6 305.5,368.7 306.0,368.8 306.5,368.8 307.0,368.9 307.5,368.9 308.0,369.0 308.5,369.1 309.0,369.1 309.5,369.2 310.0,369.2 310.5,369.3 311.0,369.4 311.5,369.4 312.0,369.5 312.5,369.7 313.0,369.9 313.5,370.2 314.0,370.4 314.5,370.6 315.0,370.8 315.5,371.0 316.0,371.2 316.5,371.5 317.0,371.7 317.5,371.9 318.0,372.1 318.5,372.3 319.0,372.6 319.5,372.8 320.0,373.0 320.5,373.1 321.0,373.3 321.5,373.4 322.0,373.5 322.5,373.7 323.0,373.8 323.5,373.9 324.0,374.1 324.5,374.2 325.0,374.3 325.5,374.5 326.0,374.6 326.5,374.7 327.0,374.9 327.5,375.0 328.0,375.1 328.5,375.3 329.0,375.4 329.5,375.5 330.0,375.7 330.5,375.8 331.0,375.9 331.5,376.1 332.0,376.2 332.5,376.3 333.0,376.5 333.5,376.6 334.0,376.7 334.5,376.9 335.0,377.0 335.5,377.1 336.0,377.2 336.5,377.2 337.0,377.3 337.5,377.4 338.0,377.5 338.5,377.6 339.0,377.7 339.5,377.8 340.0,377.8 340.5,377.9 341.0,378.0 341.5,378.1 342.0,378.2 342.5,378.2 343.0,378.3 343.5,378.4 344.0,378.5 344.5,378.6 345.0,378.7 345.5,378.8 346.0,378.8 346.5,378.9 347.0,379.0 347.5,379.1 348.0,379.2 348.5,379.2 349.0,379.3 349.5,379.4 350.0,379.5 350.5,379.5 351.0,379.6 351.5,379.6 352.0,379.6 352.5,379.7 353.0,379.7 353.5,379.7 354.0,379.8 354.5,379.8 355.0,379.8 355.5,379.9 356.0,379.9 356.5,379.9 357.0,380.0 357.5,380.0 358.0,380.0 358.5,380.1 359.0,380.1 359.5,380.1 360.0,380.2 360.5,380.2 361.0,380.2 361.5,380.3 362.0,380.3 362.5,380.3 363.0,380.4 363.5,380.4 364.0,380.4 364.5,380.5 365.0,380.5 365.5,380.6 366.0,380.6 366.5,380.7 367.0,380.8 367.5,380.9 368.0,380.9 368.5,381.0 369.0,381.1 369.5,381.1 370.0,381.2 370.5,381.3 371.0,381.4 371.5,381.4 372.0,381.5 372.5,381.5 373.0,381.5 373.5,381.5 374.0,381.5 374.5,381.5 375.0,381.5 375.5,381.5 376.0,381.5 376.5,381.5 377.0,381.5 377.5,381.5 378.0,381.5 378.5,381.5 379.0,381.5 379.5,381.5 380.0,381.5 380.5,381.5 381.0,381.5 381.5,381.5 382.0,381.5 382.5,381.5 383.0,381.5 383.5,381.5 384.0,381.5 384.5,381.5 385.0,381.5 385.5,381.7 386.0,381.9 386.5,382.0 387.0,382.2 387.5,382.4 388.0,382.6 388.5,382.7 389.0,382.9 389.5,383.1 390.0,383.2 390.5,383.4 391.0,383.6 391.5,383.8 392.0,383.9 392.5,384.1 393.0,384.3 393.5,384.5 394.0,384.6 394.5,384.8 395.0,385.0 395.5,385.2 396.0,385.5 396.5,385.8 397.0,386.0 397.5,386.2 398.0,386.5 398.5,386.8 399.0,387.0 399.5,387.2 400.0,387.5 400.5,387.8 401.0,388.0 401.5,388.2 402.0,388.5 402.5,388.8 403.0,389.0 403.5,389.2 404.0,389.5 404.5,389.8 405.0,390.0 405.5,390.0 406.0,390.0 406.5,390.1 407.0,390.1 407.5,390.1 408.0,390.1 408.5,390.1 409.0,390.1 409.5,390.1 410.0,390.2 410.5,390.2 411.0,390.2 411.5,390.2 412.0,390.2 412.5,390.2 413.0,390.3 413.5,390.3 414.0,390.3 414.5,390.3 415.0,390.3 415.5,390.4 416.0,390.4 416.5,390.4 417.0,390.4 417.5,390.4 418.0,390.4 418.5,390.4 419.0,390.5 419.5,390.5 420.0,390.5 420.5,390.5 421.0,390.6 421.5,390.6 422.0,390.6 422.5,390.7 423.0,390.7 423.5,390.7 424.0,390.8 424.5,390.8 425.0,390.8 425.5,390.9 426.0,390.9 426.5,390.9 427.0,391.0 427.5,391.0 428.0,391.0 428.5,391.1 429.0,391.1 429.5,391.1 430.0,391.2 430.5,391.2 431.0,391.2 431.5,391.3 432.0,391.3 432.5,391.3 433.0,391.4 433.5,391.4 434.0,391.4 434.5,391.5 435.0,391.5 435.5,391.4 436.0,391.4 436.5,391.3 437.0,391.2 437.5,391.1 438.0,391.1 438.5,391.0 439.0,390.9 439.5,390.8 440.0,390.8 440.5,390.7 441.0,390.6 441.5,390.5 442.0,390.4 442.5,390.4 443.0,390.3 443.5,390.2 444.0,390.1 444.5,390.1 445.0,390.0 445.5,390.0 446.0,390.1 446.5,390.1 447.0,390.1 447.5,390.2 448.0,390.2 448.5,390.2 449.0,390.3 449.5,390.3 450.0,390.4 450.5,390.4 451.0,390.4 451.5,390.5 452.0,390.5" fill="none" stroke="#c81e3c" stroke-width="1.15" stroke-linejoin="round" />
<polyline points="452.0,390.5 452.5,390.2 453.0,390.0 453.5,389.8 454.0,389.5 454.5,389.2 455.0,389.0 455.5,388.8 456.0,388.5 456.5,388.2 457.0,388.0 457.5,387.8 458.0,387.5 458.5,387.2 459.0,387.0 459.5,386.8 460.0,386.5 460.5,386.4 461.0,386.2 461.5,386.1 462.0,386.0 462.5,385.9 463.0,385.8 463.5,385.6 464.0,385.5 464.5,385.4 465.0,385.2 465.5,385.1 466.0,385.0 466.5,384.9 467.0,384.8 467.5,384.6 468.0,384.5 468.5,384.6 469.0,384.7 469.5,384.8 470.0,384.8 470.5,384.9 471.0,385.0 471.5,385.1 472.0,385.2 472.5,385.2 473.0,385.3 473.5,385.4 474.0,385.5 474.5,385.6 475.0,385.7 475.5,385.8 476.0,385.8 476.5,385.9 477.0,386.0 477.5,386.1 478.0,386.2 478.5,386.2 479.0,386.3 479.5,386.4 480.0,386.5 480.5,386.6 481.0,386.8 481.5,386.9 482.0,387.0 482.5,387.1" fill="none" stroke="#20aae6" stroke-width="1.15" stroke-linejoin="round" />
<polyline points="482.5,387.1 483.0,387.2 483.5,387.4 484.0,387.5 484.5,387.6 485.0,387.8 485.5,387.9 486.0,388.0 486.5,388.1 487.0,388.2 487.5,388.4 488.0,388.5 488.5,388.6 489.0,388.8 489.5,388.9 490.0,389.0 490.5,389.0 491.0,388.9 491.5,388.9 492.0,388.9 492.5,388.8 493.0,388.8 493.5,388.8 494.0,388.7 494.5,388.7 495.0,388.6 495.5,388.6 496.0,388.6 496.5,388.5 497.0,388.5 497.5,388.3 498.0,388.2 498.5,388.0 499.0,387.9" fill="none" stroke="#c81e3c" stroke-width="1.15" stroke-linejoin="round" />
<polyline points="499.0,387.9 499.5,387.7 500.0,387.6 500.5,387.4 501.0,387.2 501.5,387.1 502.0,386.9 502.5,386.8 503.0,386.6 503.5,386.5 504.0,386.3 504.5,386.2 505.0,386.0 505.5,386.0 506.0,386.0 506.5,386.0 507.0,386.0 507.5,386.0 508.0,386.0 508.5,386.0 509.0,386.0 509.5,386.0 510.0,386.0 510.5,386.0 511.0,386.0 511.5,386.0 512.0,386.0 512.5,386.0 513.0,386.0 513.5,386.0 514.0,386.0 514.5,386.0 515.0,386.0 515.5,386.0 516.0,386.0 516.5,386.1 517.0,386.1 517.5,386.1 518.0,386.1 518.5,386.1 519.0,386.2 519.5,386.2 520.0,386.2 520.5,386.6" fill="none" stroke="#20aae6" stroke-width="1.15" stroke-linejoin="round" />
<polyline points="520.5,386.6 521.0,387.0 521.5,387.4 522.0,387.7 522.5,388.1 523.0,388.5 523.5,388.2 524.0,387.9 524.5,387.6 525.0,387.2" fill="none" stroke="#c81e3c" stroke-width="1.15" stroke-linejoin="round" />
<polyline points="525.0,387.2 525.5,386.9 526.0,386.6 526.5,386.3 527.0,386.0 527.5,385.7 528.0,385.3 528.5,385.0 529.0,384.6 529.5,384.3 530.0,383.9 530.5,383.6 531.0,383.2 531.5,382.9 532.0,382.6 532.5,382.2 533.0,381.9 533.5,381.5 534.0,381.2 534.5,380.8 535.0,380.5 535.5,380.2 536.0,380.0 536.5,379.8 537.0,379.5 537.5,379.2 538.0,379.0 538.5,378.8 539.0,378.5 539.5,378.2 540.0,378.0 540.5,377.8 541.0,377.5 541.5,377.2 542.0,377.0 542.5,376.8 543.0,376.5 543.5,376.2 544.0,376.0 544.5,375.8 545.0,375.5 545.5,375.4 546.0,375.4 546.5,375.3 547.0,375.2 547.5,375.1 548.0,375.1 548.5,375.0 549.0,374.9 549.5,374.8 550.0,374.8 550.5,374.7 551.0,374.6 551.5,374.5 552.0,374.4 552.5,374.4 553.0,374.3 553.5,374.2 554.0,374.1 554.5,374.1 555.0,374.0 555.5,373.9 556.0,373.7 556.5,373.6 557.0,373.4 557.5,373.3 558.0,373.1 558.5,373.0 559.0,372.9 559.5,372.7 560.0,372.6 560.5,372.4 561.0,372.3 561.5,372.1 562.0,372.0 562.5,371.6 563.0,371.1 563.5,370.7 564.0,370.2 564.5,369.8 565.0,369.4 565.5,368.9 566.0,368.5 566.5,368.1 567.0,367.6 567.5,367.2 568.0,366.8 568.5,366.3 569.0,365.9 569.5,365.4 570.0,365.0" fill="none" stroke="#20aae6" stroke-width="1.15" stroke-linejoin="round" />
<polyline points="3.0,359.5 10.0,357.5 20.0,357.0 27.0,358.5 35.0,362.5 45.0,366.5 60.0,372.5 75.0,378.5 90.0,382.5 100.0,384.5 108.0,385.5 111.0,381.0 115.0,376.0 122.0,372.5 130.0,368.5 140.0,364.0 150.0,357.0 158.0,353.5 165.0,353.0 172.0,355.0 180.0,357.5 190.0,361.0 200.0,364.5 207.0,366.5 215.0,373.0 222.0,380.0 230.0,386.0 238.0,389.5 245.0,390.5 252.0,389.0 260.0,386.0 270.0,383.0 280.0,378.0 290.0,375.0 300.0,373.5 310.0,373.0 320.0,375.0 335.0,379.5 350.0,383.5 370.0,384.0 385.0,383.0 400.0,386.0 415.0,389.0 430.0,391.0 440.0,390.0 450.0,385.0 455.0,375.0 460.0,365.0 465.0,358.5 472.0,354.5 480.0,353.5 490.0,355.0 497.0,356.0 505.0,352.0 512.0,349.5 520.0,349.5 525.0,352.0 530.0,348.0 540.0,344.0 555.0,337.0 570.0,333.0" fill="none" stroke="#b8bcc0" stroke-width="1" stroke-dasharray="1.4 1.4" stroke-linejoin="round" />
<polyline points="3.0,357.7 5.0,355.5 9.0,354.5 13.0,356.3 18.0,358.0 22.0,356.0 26.0,358.0 29.0,364.5 33.0,369.5 39.0,370.0 44.0,368.5 47.0,371.0 51.0,372.0 55.0,375.0 60.0,376.5 65.0,377.0 70.0,379.5 77.0,383.0 85.0,383.5 92.0,384.5 99.0,386.5 105.0,388.0 108.0,388.0 111.0,370.0 115.5,360.0 119.0,364.0 123.0,369.0 127.0,367.0 131.0,363.0 135.0,361.0 140.0,360.0 143.0,356.0 148.0,350.5 155.0,350.0 160.0,350.0 163.0,352.5 168.0,357.0 171.0,354.5 176.0,354.5 180.0,360.0 185.0,365.0 190.0,367.5 193.0,366.5 196.0,369.0 200.0,365.5 203.0,364.0 206.0,365.0 210.0,373.0 214.0,381.0 218.0,385.0 225.0,388.0 232.0,390.0 240.0,391.0 248.0,391.0 252.0,388.0 256.0,384.0 260.0,381.5 265.0,381.5 270.0,383.0 274.0,372.0 278.0,367.0 283.0,368.5 290.0,372.0 296.0,373.5 300.0,372.0 305.0,370.0 312.0,373.0 318.0,376.5 325.0,380.0 335.0,385.0 345.0,386.5 355.0,387.0 357.0,383.0 360.0,379.5 365.0,380.0 370.0,383.0 378.0,384.0 382.0,377.0 386.0,378.0 392.0,382.0 398.0,388.0 405.0,390.0 415.0,390.5 425.0,391.0 435.0,391.5 438.0,384.0 442.0,379.5 448.0,379.5 452.0,377.0 456.0,360.0 460.0,351.0 465.0,346.0 472.0,344.5 476.0,349.0 480.0,352.0 486.0,354.5 490.0,356.0 493.0,360.0 497.0,358.0 500.0,352.0 505.0,346.5 510.0,345.0 515.0,347.5 520.0,349.0 522.5,363.0 525.0,350.0 530.0,343.0 540.0,337.0 550.0,332.0 570.0,328.5" fill="none" stroke="#20aae6" stroke-width="1.15" stroke-linejoin="round" />
<rect x="3" y="323.4" width="775" height="1.7" fill="#4e545c"/>
<rect x="3" y="395" width="775" height="1.6" fill="#4a5058"/>
<rect x="3" y="410" width="775" height="1.3" fill="#4a5058"/>
<rect x="3" y="422.6" width="775" height="0.9" fill="#4a5058"/>
<rect x="3.00" y="396.8" width="107.00" height="12.9" fill="#a8107a"/>
<rect x="110.00" y="396.8" width="98.00" height="12.9" fill="#0a5cc8"/>
<rect x="208.00" y="396.8" width="64.00" height="12.9" fill="#a8107a"/>
<rect x="272.00" y="396.8" width="45.00" height="12.9" fill="#0a5cc8"/>
<rect x="317.00" y="396.8" width="135.00" height="12.9" fill="#a8107a"/>
<rect x="452.00" y="396.8" width="39.00" height="12.9" fill="#0a5cc8"/>
<rect x="491.00" y="396.8" width="11.00" height="12.9" fill="#a8107a"/>
<rect x="502.00" y="396.8" width="19.20" height="12.9" fill="#0a5cc8"/>
<rect x="521.20" y="396.8" width="3.70" height="12.9" fill="#a8107a"/>
<rect x="524.90" y="396.8" width="64.10" height="12.9" fill="#0a5cc8"/>
<rect x="589.00" y="396.8" width="23.00" height="12.9" fill="#a8107a"/>
<rect x="612.00" y="396.8" width="48.00" height="12.9" fill="#0a5cc8"/>
<rect x="660.00" y="396.8" width="4.50" height="12.9" fill="#a8107a"/>
<rect x="4.35" y="396.8" width="1" height="12.9" fill="#780a58"/>
<rect x="8.12" y="396.8" width="1" height="12.9" fill="#780a58"/>
<rect x="11.88" y="396.8" width="1" height="12.9" fill="#780a58"/>
<rect x="15.65" y="396.8" width="1" height="12.9" fill="#780a58"/>
<rect x="19.42" y="396.8" width="1" height="12.9" fill="#780a58"/>
<rect x="23.19" y="396.8" width="1" height="12.9" fill="#780a58"/>
<rect x="26.96" y="396.8" width="1" height="12.9" fill="#780a58"/>
<rect x="30.73" y="396.8" width="1" height="12.9" fill="#780a58"/>
<rect x="34.50" y="396.8" width="1" height="12.9" fill="#780a58"/>
<rect x="38.27" y="396.8" width="1" height="12.9" fill="#780a58"/>
<rect x="42.04" y="396.8" width="1" height="12.9" fill="#780a58"/>
<rect x="45.81" y="396.8" width="1" height="12.9" fill="#780a58"/>
<rect x="49.57" y="396.8" width="1" height="12.9" fill="#780a58"/>
<rect x="53.34" y="396.8" width="1" height="12.9" fill="#780a58"/>
<rect x="57.11" y="396.8" width="1" height="12.9" fill="#780a58"/>
<rect x="60.88" y="396.8" width="1" height="12.9" fill="#780a58"/>
<rect x="64.65" y="396.8" width="1" height="12.9" fill="#780a58"/>
<rect x="68.42" y="396.8" width="1" height="12.9" fill="#780a58"/>
<rect x="72.19" y="396.8" width="1" height="12.9" fill="#780a58"/>
<rect x="75.96" y="396.8" width="1" height="12.9" fill="#780a58"/>
<rect x="79.73" y="396.8" width="1" height="12.9" fill="#780a58"/>
<rect x="83.50" y="396.8" width="1" height="12.9" fill="#780a58"/>
<rect x="87.27" y="396.8" width="1" height="12.9" fill="#780a58"/>
<rect x="91.03" y="396.8" width="1" height="12.9" fill="#780a58"/>
<rect x="94.80" y="396.8" width="1" height="12.9" fill="#780a58"/>
<rect x="98.57" y="396.8" width="1" height="12.9" fill="#780a58"/>
<rect x="102.34" y="396.8" width="1" height="12.9" fill="#780a58"/>
<rect x="106.11" y="396.8" width="1" height="12.9" fill="#780a58"/>
<rect x="109.88" y="396.8" width="1" height="12.9" fill="#08449c"/>
<rect x="113.65" y="396.8" width="1" height="12.9" fill="#08449c"/>
<rect x="117.42" y="396.8" width="1" height="12.9" fill="#08449c"/>
<rect x="121.19" y="396.8" width="1" height="12.9" fill="#08449c"/>
<rect x="124.96" y="396.8" width="1" height="12.9" fill="#08449c"/>
<rect x="128.72" y="396.8" width="1" height="12.9" fill="#08449c"/>
<rect x="132.49" y="396.8" width="1" height="12.9" fill="#08449c"/>
<rect x="136.26" y="396.8" width="1" height="12.9" fill="#08449c"/>
<rect x="140.03" y="396.8" width="1" height="12.9" fill="#08449c"/>
<rect x="143.80" y="396.8" width="1" height="12.9" fill="#08449c"/>
<rect x="147.57" y="396.8" width="1" height="12.9" fill="#08449c"/>
<rect x="151.34" y="396.8" width="1" height="12.9" fill="#08449c"/>
<rect x="155.11" y="396.8" width="1" height="12.9" fill="#08449c"/>
<rect x="158.88" y="396.8" width="1" height="12.9" fill="#08449c"/>
<rect x="162.65" y="396.8" width="1" height="12.9" fill="#08449c"/>
<rect x="166.41" y="396.8" width="1" height="12.9" fill="#08449c"/>
<rect x="170.18" y="396.8" width="1" height="12.9" fill="#08449c"/>
<rect x="173.95" y="396.8" width="1" height="12.9" fill="#08449c"/>
<rect x="177.72" y="396.8" width="1" height="12.9" fill="#08449c"/>
<rect x="181.49" y="396.8" width="1" height="12.9" fill="#08449c"/>
<rect x="185.26" y="396.8" width="1" height="12.9" fill="#08449c"/>
<rect x="189.03" y="396.8" width="1" height="12.9" fill="#08449c"/>
<rect x="192.80" y="396.8" width="1" height="12.9" fill="#08449c"/>
<rect x="196.57" y="396.8" width="1" height="12.9" fill="#08449c"/>
<rect x="200.34" y="396.8" width="1" height="12.9" fill="#08449c"/>
<rect x="204.10" y="396.8" width="1" height="12.9" fill="#08449c"/>
<rect x="207.87" y="396.8" width="1" height="12.9" fill="#780a58"/>
<rect x="211.64" y="396.8" width="1" height="12.9" fill="#780a58"/>
<rect x="215.41" y="396.8" width="1" height="12.9" fill="#780a58"/>
<rect x="219.18" y="396.8" width="1" height="12.9" fill="#780a58"/>
<rect x="222.95" y="396.8" width="1" height="12.9" fill="#780a58"/>
<rect x="226.72" y="396.8" width="1" height="12.9" fill="#780a58"/>
<rect x="230.49" y="396.8" width="1" height="12.9" fill="#780a58"/>
<rect x="234.26" y="396.8" width="1" height="12.9" fill="#780a58"/>
<rect x="238.03" y="396.8" width="1" height="12.9" fill="#780a58"/>
<rect x="241.79" y="396.8" width="1" height="12.9" fill="#780a58"/>
<rect x="245.56" y="396.8" width="1" height="12.9" fill="#780a58"/>
<rect x="249.33" y="396.8" width="1" height="12.9" fill="#780a58"/>
<rect x="253.10" y="396.8" width="1" height="12.9" fill="#780a58"/>
<rect x="256.87" y="396.8" width="1" height="12.9" fill="#780a58"/>
<rect x="260.64" y="396.8" width="1" height="12.9" fill="#780a58"/>
<rect x="264.41" y="396.8" width="1" height="12.9" fill="#780a58"/>
<rect x="268.18" y="396.8" width="1" height="12.9" fill="#780a58"/>
<rect x="271.95" y="396.8" width="1" height="12.9" fill="#08449c"/>
<rect x="275.72" y="396.8" width="1" height="12.9" fill="#08449c"/>
<rect x="279.48" y="396.8" width="1" height="12.9" fill="#08449c"/>
<rect x="283.25" y="396.8" width="1" height="12.9" fill="#08449c"/>
<rect x="287.02" y="396.8" width="1" height="12.9" fill="#08449c"/>
<rect x="290.79" y="396.8" width="1" height="12.9" fill="#08449c"/>
<rect x="294.56" y="396.8" width="1" height="12.9" fill="#08449c"/>
<rect x="298.33" y="396.8" width="1" height="12.9" fill="#08449c"/>
<rect x="302.10" y="396.8" width="1" height="12.9" fill="#08449c"/>
<rect x="305.87" y="396.8" width="1" height="12.9" fill="#08449c"/>
<rect x="309.64" y="396.8" width="1" height="12.9" fill="#08449c"/>
<rect x="313.41" y="396.8" width="1" height="12.9" fill="#08449c"/>
<rect x="317.17" y="396.8" width="1" height="12.9" fill="#780a58"/>
<rect x="320.94" y="396.8" width="1" height="12.9" fill="#780a58"/>
<rect x="324.71" y="396.8" width="1" height="12.9" fill="#780a58"/>
<rect x="328.48" y="396.8" width="1" height="12.9" fill="#780a58"/>
<rect x="332.25" y="396.8" width="1" height="12.9" fill="#780a58"/>
<rect x="336.02" y="396.8" width="1" height="12.9" fill="#780a58"/>
<rect x="339.79" y="396.8" width="1" height="12.9" fill="#780a58"/>
<rect x="343.56" y="396.8" width="1" height="12.9" fill="#780a58"/>
<rect x="347.33" y="396.8" width="1" height="12.9" fill="#780a58"/>
<rect x="351.10" y="396.8" width="1" height="12.9" fill="#780a58"/>
<rect x="354.86" y="396.8" width="1" height="12.9" fill="#780a58"/>
<rect x="358.63" y="396.8" width="1" height="12.9" fill="#780a58"/>
<rect x="362.40" y="396.8" width="1" height="12.9" fill="#780a58"/>
<rect x="366.17" y="396.8" width="1" height="12.9" fill="#780a58"/>
<rect x="369.94" y="396.8" width="1" height="12.9" fill="#780a58"/>
<rect x="373.71" y="396.8" width="1" height="12.9" fill="#780a58"/>
<rect x="377.48" y="396.8" width="1" height="12.9" fill="#780a58"/>
<rect x="381.25" y="396.8" width="1" height="12.9" fill="#780a58"/>
<rect x="385.02" y="396.8" width="1" height="12.9" fill="#780a58"/>
<rect x="388.79" y="396.8" width="1" height="12.9" fill="#780a58"/>
<rect x="392.55" y="396.8" width="1" height="12.9" fill="#780a58"/>
<rect x="396.32" y="396.8" width="1" height="12.9" fill="#780a58"/>
<rect x="400.09" y="396.8" width="1" height="12.9" fill="#780a58"/>
<rect x="403.86" y="396.8" width="1" height="12.9" fill="#780a58"/>
<rect x="407.63" y="396.8" width="1" height="12.9" fill="#780a58"/>
<rect x="411.40" y="396.8" width="1" height="12.9" fill="#780a58"/>
<rect x="415.17" y="396.8" width="1" height="12.9" fill="#780a58"/>
<rect x="418.94" y="396.8" width="1" height="12.9" fill="#780a58"/>
<rect x="422.71" y="396.8" width="1" height="12.9" fill="#780a58"/>
<rect x="426.48" y="396.8" width="1" height="12.9" fill="#780a58"/>
<rect x="430.24" y="396.8" width="1" height="12.9" fill="#780a58"/>
<rect x="434.01" y="396.8" width="1" height="12.9" fill="#780a58"/>
<rect x="437.78" y="396.8" width="1" height="12.9" fill="#780a58"/>
<rect x="441.55" y="396.8" width="1" height="12.9" fill="#780a58"/>
<rect x="445.32" y="396.8" width="1" height="12.9" fill="#780a58"/>
<rect x="449.09" y="396.8" width="1" height="12.9" fill="#780a58"/>
<rect x="452.86" y="396.8" width="1" height="12.9" fill="#08449c"/>
<rect x="456.63" y="396.8" width="1" height="12.9" fill="#08449c"/>
<rect x="460.40" y="396.8" width="1" height="12.9" fill="#08449c"/>
<rect x="464.17" y="396.8" width="1" height="12.9" fill="#08449c"/>
<rect x="467.93" y="396.8" width="1" height="12.9" fill="#08449c"/>
<rect x="471.70" y="396.8" width="1" height="12.9" fill="#08449c"/>
<rect x="475.47" y="396.8" width="1" height="12.9" fill="#08449c"/>
<rect x="479.24" y="396.8" width="1" height="12.9" fill="#08449c"/>
<rect x="483.01" y="396.8" width="1" height="12.9" fill="#08449c"/>
<rect x="486.78" y="396.8" width="1" height="12.9" fill="#08449c"/>
<rect x="490.55" y="396.8" width="1" height="12.9" fill="#08449c"/>
<rect x="494.32" y="396.8" width="1" height="12.9" fill="#780a58"/>
<rect x="498.09" y="396.8" width="1" height="12.9" fill="#780a58"/>
<rect x="501.86" y="396.8" width="1" height="12.9" fill="#08449c"/>
<rect x="505.62" y="396.8" width="1" height="12.9" fill="#08449c"/>
<rect x="509.39" y="396.8" width="1" height="12.9" fill="#08449c"/>
<rect x="513.16" y="396.8" width="1" height="12.9" fill="#08449c"/>
<rect x="516.93" y="396.8" width="1" height="12.9" fill="#08449c"/>
<rect x="520.70" y="396.8" width="1" height="12.9" fill="#08449c"/>
<rect x="524.47" y="396.8" width="1" height="12.9" fill="#780a58"/>
<rect x="528.24" y="396.8" width="1" height="12.9" fill="#08449c"/>
<rect x="532.01" y="396.8" width="1" height="12.9" fill="#08449c"/>
<rect x="535.78" y="396.8" width="1" height="12.9" fill="#08449c"/>
<rect x="539.55" y="396.8" width="1" height="12.9" fill="#08449c"/>
<rect x="543.31" y="396.8" width="1" height="12.9" fill="#08449c"/>
<rect x="547.08" y="396.8" width="1" height="12.9" fill="#08449c"/>
<rect x="550.85" y="396.8" width="1" height="12.9" fill="#08449c"/>
<rect x="554.62" y="396.8" width="1" height="12.9" fill="#08449c"/>
<rect x="558.39" y="396.8" width="1" height="12.9" fill="#08449c"/>
<rect x="562.16" y="396.8" width="1" height="12.9" fill="#08449c"/>
<rect x="565.93" y="396.8" width="1" height="12.9" fill="#08449c"/>
<rect x="569.70" y="396.8" width="1" height="12.9" fill="#08449c"/>
<rect x="573.47" y="396.8" width="1" height="12.9" fill="#08449c"/>
<rect x="577.24" y="396.8" width="1" height="12.9" fill="#08449c"/>
<rect x="581.00" y="396.8" width="1" height="12.9" fill="#08449c"/>
<rect x="584.77" y="396.8" width="1" height="12.9" fill="#08449c"/>
<rect x="588.54" y="396.8" width="1" height="12.9" fill="#08449c"/>
<rect x="592.31" y="396.8" width="1" height="12.9" fill="#780a58"/>
<rect x="596.08" y="396.8" width="1" height="12.9" fill="#780a58"/>
<rect x="599.85" y="396.8" width="1" height="12.9" fill="#780a58"/>
<rect x="603.62" y="396.8" width="1" height="12.9" fill="#780a58"/>
<rect x="607.39" y="396.8" width="1" height="12.9" fill="#780a58"/>
<rect x="611.16" y="396.8" width="1" height="12.9" fill="#780a58"/>
<rect x="614.93" y="396.8" width="1" height="12.9" fill="#08449c"/>
<rect x="618.69" y="396.8" width="1" height="12.9" fill="#08449c"/>
<rect x="622.46" y="396.8" width="1" height="12.9" fill="#08449c"/>
<rect x="626.23" y="396.8" width="1" height="12.9" fill="#08449c"/>
<rect x="630.00" y="396.8" width="1" height="12.9" fill="#08449c"/>
<rect x="633.77" y="396.8" width="1" height="12.9" fill="#08449c"/>
<rect x="637.54" y="396.8" width="1" height="12.9" fill="#08449c"/>
<rect x="641.31" y="396.8" width="1" height="12.9" fill="#08449c"/>
<rect x="645.08" y="396.8" width="1" height="12.9" fill="#08449c"/>
<rect x="648.85" y="396.8" width="1" height="12.9" fill="#08449c"/>
<rect x="652.62" y="396.8" width="1" height="12.9" fill="#08449c"/>
<rect x="656.38" y="396.8" width="1" height="12.9" fill="#08449c"/>
<rect x="660.15" y="396.8" width="1" height="12.9" fill="#780a58"/>
<rect x="663.92" y="396.8" width="1" height="12.9" fill="#780a58"/>
<line x1="778" y1="2.5" x2="778" y2="423.5" stroke="#5a626a" stroke-width="0.75"/>
<line x1="778" y1="11.8" x2="780" y2="11.8" stroke="#5a626a" stroke-width="0.8"/>
<line x1="778" y1="28.95" x2="780" y2="28.95" stroke="#5a626a" stroke-width="0.8"/>
<line x1="778" y1="46.099999999999994" x2="780" y2="46.099999999999994" stroke="#5a626a" stroke-width="0.8"/>
<line x1="778" y1="63.25" x2="780" y2="63.25" stroke="#5a626a" stroke-width="0.8"/>
<line x1="778" y1="80.39999999999999" x2="780" y2="80.39999999999999" stroke="#5a626a" stroke-width="0.8"/>
<line x1="778" y1="97.55" x2="780" y2="97.55" stroke="#5a626a" stroke-width="0.8"/>
<line x1="778" y1="114.69999999999999" x2="780" y2="114.69999999999999" stroke="#5a626a" stroke-width="0.8"/>
<line x1="778" y1="131.85" x2="780" y2="131.85" stroke="#5a626a" stroke-width="0.8"/>
<line x1="778" y1="149.0" x2="780" y2="149.0" stroke="#5a626a" stroke-width="0.8"/>
<line x1="778" y1="166.15" x2="780" y2="166.15" stroke="#5a626a" stroke-width="0.8"/>
<line x1="778" y1="183.3" x2="780" y2="183.3" stroke="#5a626a" stroke-width="0.8"/>
<line x1="778" y1="200.45" x2="780" y2="200.45" stroke="#5a626a" stroke-width="0.8"/>
<line x1="778" y1="217.6" x2="780" y2="217.6" stroke="#5a626a" stroke-width="0.8"/>
<line x1="778" y1="234.75" x2="780" y2="234.75" stroke="#5a626a" stroke-width="0.8"/>
<line x1="778" y1="251.89999999999998" x2="780" y2="251.89999999999998" stroke="#5a626a" stroke-width="0.8"/>
<line x1="778" y1="269.05" x2="780" y2="269.05" stroke="#5a626a" stroke-width="0.8"/>
<line x1="778" y1="286.2" x2="780" y2="286.2" stroke="#5a626a" stroke-width="0.8"/>
<line x1="778" y1="303.34999999999997" x2="780" y2="303.34999999999997" stroke="#5a626a" stroke-width="0.8"/>
<line x1="778" y1="320.5" x2="780" y2="320.5" stroke="#5a626a" stroke-width="0.8"/>
<line x1="2.4" y1="423" x2="2.4" y2="425" stroke="#5a626a" stroke-width="0.8"/>
<line x1="32.55" y1="423" x2="32.55" y2="425" stroke="#5a626a" stroke-width="0.8"/>
<line x1="62.699999999999996" y1="423" x2="62.699999999999996" y2="425" stroke="#5a626a" stroke-width="0.8"/>
<line x1="92.85" y1="423" x2="92.85" y2="425" stroke="#5a626a" stroke-width="0.8"/>
<line x1="123.0" y1="423" x2="123.0" y2="425" stroke="#5a626a" stroke-width="0.8"/>
<line x1="153.15" y1="423" x2="153.15" y2="425" stroke="#5a626a" stroke-width="0.8"/>
<line x1="183.29999999999998" y1="423" x2="183.29999999999998" y2="425" stroke="#5a626a" stroke-width="0.8"/>
<line x1="213.45" y1="423" x2="213.45" y2="425" stroke="#5a626a" stroke-width="0.8"/>
<line x1="243.6" y1="423" x2="243.6" y2="425" stroke="#5a626a" stroke-width="0.8"/>
<line x1="273.74999999999994" y1="423" x2="273.74999999999994" y2="425" stroke="#5a626a" stroke-width="0.8"/>
<line x1="303.9" y1="423" x2="303.9" y2="425" stroke="#5a626a" stroke-width="0.8"/>
<line x1="334.04999999999995" y1="423" x2="334.04999999999995" y2="425" stroke="#5a626a" stroke-width="0.8"/>
<line x1="364.19999999999993" y1="423" x2="364.19999999999993" y2="425" stroke="#5a626a" stroke-width="0.8"/>
<line x1="394.34999999999997" y1="423" x2="394.34999999999997" y2="425" stroke="#5a626a" stroke-width="0.8"/>
<line x1="424.49999999999994" y1="423" x2="424.49999999999994" y2="425" stroke="#5a626a" stroke-width="0.8"/>
<line x1="454.65" y1="423" x2="454.65" y2="425" stroke="#5a626a" stroke-width="0.8"/>
<line x1="484.79999999999995" y1="423" x2="484.79999999999995" y2="425" stroke="#5a626a" stroke-width="0.8"/>
<line x1="514.9499999999999" y1="423" x2="514.9499999999999" y2="425" stroke="#5a626a" stroke-width="0.8"/>
<line x1="545.0999999999999" y1="423" x2="545.0999999999999" y2="425" stroke="#5a626a" stroke-width="0.8"/>
<line x1="575.25" y1="423" x2="575.25" y2="425" stroke="#5a626a" stroke-width="0.8"/>
<line x1="605.4" y1="423" x2="605.4" y2="425" stroke="#5a626a" stroke-width="0.8"/>
<line x1="635.55" y1="423" x2="635.55" y2="425" stroke="#5a626a" stroke-width="0.8"/>
</svg>
<div class="abs" style="left:0;top:0;width:800px;height:1.5px;background:#7c7c7c"></div>
<div class="abs" style="left:0;top:1.5px;width:800px;height:1.2px;background:#0a0d12"></div>
<div class="abs" style="left:0;top:0;width:1.3px;height:434px;background:#565b60"></div>
<div class="abs" style="left:1.3px;top:1.5px;width:1.3px;height:431px;background:#0a0d12"></div>
<div class="abs" style="left:798.7px;top:0;width:1.3px;height:434px;background:#b9bcc0"></div>
<div class="abs" style="left:0;top:431.6px;width:800px;height:2.4px;background:#c4c6c9"></div>
<div class="abs" style="left:3.9px;top:3.9px;font-size:4.6px;color:#8a9098">▼</div>
<div class="abs" style="left:9.6px;top:4px;font-size:5px;color:#626a72">EURGBP(£),M5</div>
<div class="clock" style="left:39px;width:73.4px;background:#a81c24">HONG KONG 17:02</div>
<div class="clock" style="left:113.2px;width:61.6px;background:#0d74d8">LONDON  10:02</div>
<div class="clock" style="left:176.6px;width:70.4px;background:#a81c24">NEW YORK  05:02</div>
<div class="abs" style="left:247px;top:3.3px;width:292.6px;height:8.9px;background:#2c4b82"></div>
<div class="abs" style="left:375.6px;top:4.9px;font-size:5.95px;color:#e4e9f0;font-style:italic;text-decoration:underline;text-underline-offset:0.3px;text-decoration-thickness:0.5px"> News reader</div>
<svg style="position:absolute;left:519px;top:4px" width="8" height="7" viewBox="0 0 8 7"><path d="M1.2 5L3.7 2.2 6.2 5Z" fill="#fff"/></svg>
<svg style="position:absolute;left:529px;top:4px" width="9" height="7" viewBox="0 0 9 7"><rect x="1.1" y="1.1" width="6.8" height="5" fill="#1a2c50" stroke="#eef0f4" stroke-width="0.8"/><path d="M3.2 2.4L5.8 4.8M5.8 2.4L3.2 4.8" stroke="#fff" stroke-width="0.8"/></svg>
<div class="abs" style="left:12px;top:9.8px;width:18px;height:8.6px;background:#1e90ff;color:#fff;font-size:4.9px;line-height:9.8px;text-align:center">Hide</div>
<div class="abs" style="left:301.6px;top:20px;font-size:5.4px;color:#d8d020;text-shadow:0 0 0.4px #d8d020">Tokyo</div>
<div class="abs" style="left:123.2px;top:127.2px;width:5px;height:1px;background:#c8901c"></div>
<div class="abs" style="left:127.9px;top:122.9px;width:29.2px;height:10.1px;box-sizing:border-box;border:0.9px solid #d89a18;background:#2a200c;color:#eab030;font-size:7.7px;line-height:8.3px;text-align:center;text-shadow:0 0 0.6px #000">0.87102</div>
<div class="abs" style="left:3.2px;top:312.2px;width:18.2px;height:11px;box-sizing:border-box;border:0.7px solid #25303b;background:#070b11;color:#a4a8ac;font-size:5.9px;line-height:9.6px;text-align:center">ON</div>
<div class="abs" style="left:213px;top:315.6px;font-size:7px;color:#202a35">Wednesday</div>
<div class="abs" style="right:61.8px;top:7.6px;font-size:5.3px;color:#969ea6">ASK</div>
<div class="abs" style="right:61.8px;top:15.3px;font-size:5.3px;color:#969ea6">BID</div>
<div class="abs" style="left:753px;top:5.6px;font-size:5px;color:#56606b">0.87151</div>
<div class="abs" style="left:753px;top:13.2px;font-size:5px;color:#05080c">0.87136</div>
<div class="abs" style="left:708px;top:21.6px;width:64px;height:0;border-top:0.6px dotted #505862"></div>
<div class="abs" style="left:735.6px;top:23.2px;font-size:5.2px;color:#9aa2aa">spread :</div>
<div class="abs" style="left:764.4px;top:23.2px;font-size:5.2px;color:#9aa2aa">1.5</div>
<div class="pl" style="top:8.9px">0.87305</div>
<div class="pl" style="top:26.0px">0.87275</div>
<div class="pl" style="top:43.2px">0.87245</div>
<div class="pl" style="top:60.3px">0.87215</div>
<div class="pl" style="top:77.5px">0.87185</div>
<div class="pl" style="top:94.7px">0.87155</div>
<div class="pl" style="top:111.8px">0.87125</div>
<div class="pl" style="top:128.9px">0.87095</div>
<div class="pl" style="top:146.1px">0.87065</div>
<div class="pl" style="top:163.2px">0.87035</div>
<div class="pl" style="top:180.4px">0.87005</div>
<div class="pl" style="top:197.5px">0.86975</div>
<div class="pl" style="top:214.7px">0.86945</div>
<div class="pl" style="top:231.8px">0.86915</div>
<div class="pl" style="top:249.0px">0.86885</div>
<div class="pl" style="top:266.1px">0.86855</div>
<div class="pl" style="top:283.3px">0.86825</div>
<div class="pl" style="top:300.4px">0.86795</div>
<div class="pl" style="top:317.6px">0.86765</div>
<div class="abs" style="top:97px;left:778.2px;width:19.2px;height:5.1px;line-height:5.4px;background:#a4a8ac;color:#10161c;text-align:center;font-size:4.5px">0.87151</div>
<div class="abs" style="top:105.6px;left:778.2px;width:19.2px;height:5.1px;line-height:5.4px;background:#a4a8ac;color:#10161c;text-align:center;font-size:4.5px">0.87136</div>
<div class="pl" style="top:325px;left:780.2px">0</div>
<div class="pl" style="top:389px;left:780.2px">0</div>
<div class="pl" style="top:396.6px;left:780.2px">0</div>
<div class="pl" style="top:403.5px;left:780.2px">0</div>
<div class="pl" style="top:411px;left:780.2px">0</div>
<div class="pl" style="top:417px;left:780.2px">0</div>
<div class="tl" style="left:3.2px">18 Oct 2022</div>
<div class="tl" style="left:33.4px">18 Oct 20:00</div>
<div class="tl" style="left:63.5px">18 Oct 20:40</div>
<div class="tl" style="left:93.6px">18 Oct 21:20</div>
<div class="tl" style="left:123.8px">18 Oct 22:00</div>
<div class="tl" style="left:153.9px">18 Oct 22:45</div>
<div class="tl" style="left:184.1px">18 Oct 23:25</div>
<div class="tl" style="left:214.2px">19 Oct 00:05</div>
<div class="tl" style="left:244.4px">19 Oct 00:45</div>
<div class="tl" style="left:274.5px">19 Oct 01:25</div>
<div class="tl" style="left:304.7px">19 Oct 02:05</div>
<div class="tl" style="left:334.8px">19 Oct 02:45</div>
<div class="tl" style="left:365.0px">19 Oct 03:25</div>
<div class="tl" style="left:395.1px">19 Oct 04:05</div>
<div class="tl" style="left:425.3px">19 Oct 04:45</div>
<div class="tl" style="left:455.4px">19 Oct 05:25</div>
<div class="tl" style="left:485.6px">19 Oct 06:05</div>
<div class="tl" style="left:515.8px">19 Oct 06:45</div>
<div class="tl" style="left:545.9px">19 Oct 07:25</div>
<div class="tl" style="left:576.1px">19 Oct 08:05</div>
<div class="tl" style="left:606.2px">19 Oct 08:45</div>
<div class="tl" style="left:636.4px">19 Oct 09:25</div>
<div class="sym" style="left:15.00px;"><i><span>AUDCAD(£)</span></i></div>
<div class="sym" style="left:40.38px;"><i><span>AUDCHF(£)</span></i></div>
<div class="sym" style="left:65.76px;"><i><span>AUDJPY(£)</span></i></div>
<div class="sym" style="left:91.14px;"><i><span>AUDSGD(£)</span></i></div>
<div class="sym" style="left:116.52px;"><i><span>AUDUSD(£)</span></i></div>
<div class="sym" style="left:141.90px;"><i><span>AUDNZD(£)</span></i></div>
<div class="sym" style="left:167.28px;"><i><span>CADCHF(£)</span></i></div>
<div class="sym" style="left:192.66px;"><i><span>CADJPY(£)</span></i></div>
<div class="sym" style="left:218.04px;"><i><span>CHFJPY(£)</span></i></div>
<div class="sym" style="left:243.42px;"><i><span>EURAUD(£)</span></i></div>
<div class="sym" style="left:268.80px;"><i><span>BCHUSD(£)</span></i></div>
<div class="sym" style="left:294.18px;"><i><span>BTCUSD(£)</span></i></div>
<div class="sym" style="left:319.56px;"><i><span>BTGUSD(£)</span></i></div>
<div class="sym" style="left:344.94px;background:#1e90ff;color:#0c2850;"><i><span>EURGBP(£)</span></i></div>
<div class="sym" style="left:370.32px;"><i><span>ETHUSD(£)</span></i></div>
<div class="sym" style="left:395.70px;"><i><span>EURCAD(£)</span></i></div>
<div class="sym" style="left:421.08px;"><i><span>EURCHF(£)</span></i></div>
<div class="sym" style="left:446.46px;"><i><span>EURJPY(£)</span></i></div>
<div class="sym" style="left:471.84px;"><i><span>EURNZD(£)</span></i></div>
<div class="sym" style="left:497.22px;"><i><span>EURSGD(£)</span></i></div>
<div class="sym" style="left:522.60px;"><i><span>EURUSD(£)</span></i></div>
<div class="sym" style="left:547.98px;"><i><span>GBPAUD(£)</span></i></div>
<div class="sym" style="left:573.36px;"><i><span>GBPCAD(£)</span></i></div>
<div class="sym" style="left:598.74px;"><i><span>GBPCHF(£)</span></i></div>
<div class="sym" style="left:624.12px;"><i><span>GBPJPY(£)</span></i></div>
<div class="sym" style="left:649.50px;"><i><span>GBPNZD(£)</span></i></div>
<div class="sym" style="left:674.88px;"><i><span>GBPSGD(£)</span></i></div>
<div class="sym" style="left:700.26px;"><i><span>GBPUSD(£)</span></i></div>
<div class="sym" style="left:725.64px;"><i><span>LTCUSD(£)</span></i></div>
<div class="sym" style="left:751.02px;"><i><span>NZDCAD(£)</span></i></div>
<div class="abs" style="left:566px;top:29px;width:1px;height:335px;background:#7e848a"></div>
<div class="dlg"><div class="title"></div>
<svg style="position:absolute;left:3px;top:3px" width="10" height="9" viewBox="0 0 10 9"><rect x="0.6" y="0.7" width="6.4" height="4.8" fill="#eaf2fc" stroke="#6a9ad8" stroke-width="0.6"/><rect x="0.6" y="0.7" width="6.4" height="1.1" fill="#4a80d0"/><rect x="4.2" y="3" width="5.2" height="5" rx="0.9" fill="#f0cc30" stroke="#b8900c" stroke-width="0.5"/><path d="M6 6.6c0.3-1 0.5-2 1.4-2.4M5.7 5h2" fill="none" stroke="#7a5a08" stroke-width="0.45"/></svg>
<div class="abs" style="left:13.6px;top:4.8px;font-size:5.4px;color:#000">Indicators on EURGBP(£),M5</div>
<div class="abs" style="left:175.9px;top:3.6px;font-size:6.8px;font-weight:bold;color:#222">?</div>
<svg style="position:absolute;left:196px;top:4.4px" width="6" height="6" viewBox="0 0 6 6"><path d="M0.7 0.7L5.3 5.3M5.3 0.7L0.7 5.3" stroke="#111" stroke-width="0.8"/></svg>
<div class="tree">
<div class="row" style="left:22.0px;top:1.18px;height:7.4px;line-height:7.4px;background:#0078d7;color:#fff;padding:0 0.9px"><span style="position:relative;top:0.5px">Main chart</span></div>
<div class="row" style="left:32.3px;top:9.05px">XU ma simple BT 1.12</div>
<div class="row" style="left:32.3px;top:17.52px">!SM_NewHUD</div>
<div class="row" style="left:32.3px;top:26.00px">WeekDays&amp;Holidays</div>
<div class="row" style="left:32.3px;top:34.48px">Symbol changer profit display v5.1</div>
<div class="row" style="left:32.3px;top:42.95px">Pips</div>
<div class="row" style="left:32.3px;top:51.42px">YFX_ind_SymbolWatermark</div>
<div class="row" style="left:32.3px;top:59.90px">ATS V3.0</div>
<div class="row" style="left:32.3px;top:68.38px">XU v39-BORDERS</div>
<div class="row" style="left:32.3px;top:76.85px">XU v39-CLOCK</div>
<div class="row" style="left:32.3px;top:85.33px">News reader</div>
<div class="row" style="left:32.3px;top:93.80px">Auto Sessions 22,145 (btn)</div>
<div class="row" style="left:32.3px;top:102.27px">XU v44-ADR D1</div>
<div class="row" style="left:32.3px;top:110.75px">XU v44-SEMAFOR</div>
<div class="row" style="left:32.3px;top:119.23px">XU v44-TRIANGLES</div>
<div class="row" style="left:32.3px;top:127.70px">XU ma simple BT 1.12</div>
<div class="row" style="left:32.3px;top:136.17px">XU v43-PANEL2</div>
<div class="row" style="left:22.3px;top:145.05px">Indicator window 1</div>
<div class="row" style="left:32.3px;top:153.12px">Zero</div>
<div class="row" style="left:32.3px;top:161.60px">XU v44-RSIOMA</div>
<div class="row" style="left:32.3px;top:170.07px">dsl obv 1.3 BT</div>
<div class="row" style="left:22.3px;top:178.95px">Indicator window 2</div>
<div class="row" style="left:32.3px;top:187.02px">Zero</div>
<div class="row" style="left:32.3px;top:195.50px">! SuperTrend - averages new format - histo&nbsp; (mtf + alerts + arrows)</div>
<div class="row" style="left:22.3px;top:204.38px">Indicator window 3</div>
<div class="row" style="left:32.3px;top:212.45px">Zero</div>
<svg style="position:absolute;left:0;top:0" width="154" height="310" viewBox="0 0 154 310"><defs><radialGradient id="yg" cx="0.4" cy="0.4" r="0.75"><stop offset="0" stop-color="#fff2a8"/><stop offset="1" stop-color="#eec83c"/></radialGradient></defs><line x1="16.2" y1="210.7" x2="16.2" y2="217.0" stroke="#bcbcbc" stroke-width="0.6"/><line x1="16.2" y1="185.3" x2="16.2" y2="200.0" stroke="#bcbcbc" stroke-width="0.6"/><line x1="16.2" y1="151.4" x2="16.2" y2="174.6" stroke="#bcbcbc" stroke-width="0.6"/><line x1="16.2" y1="7.3" x2="16.2" y2="140.7" stroke="#bcbcbc" stroke-width="0.6"/><line x1="6.0" y1="7.3" x2="6.0" y2="208.5" stroke="#bcbcbc" stroke-width="0.6"/><line x1="6.0" y1="5.1" x2="12.5" y2="5.1" stroke="#bcbcbc" stroke-width="0.6"/><rect x="4.00" y="3.10" width="4" height="4" fill="#fff" stroke="#9a9a9a" stroke-width="0.55"/><line x1="4.90" y1="5.10" x2="7.10" y2="5.10" stroke="#222" stroke-width="0.6"/><rect x="12.4" y="2.1" width="7" height="6" fill="#fff" stroke="#2a5ad0" stroke-width="0.7"/><rect x="12.4" y="2.1" width="7" height="1.5" fill="#2a5ad0"/><path d="M13.6 6.7l1.3-2 1.2 1.6 1.4-2.2" fill="none" stroke="#2a5ad0" stroke-width="0.6"/><line x1="16.2" y1="13.6" x2="22.0" y2="13.6" stroke="#bcbcbc" stroke-width="0.6"/><rect x="22.6" y="10.6" width="6.2" height="6.2" rx="0.9" fill="url(#yg)" stroke="#c09c1c" stroke-width="0.55"/><path d="M24.7 15.3c0.4-1.2 0.6-2.6 1.8-3.2M24.2 13.3h2.6" fill="none" stroke="#7a6010" stroke-width="0.6"/><circle cx="27.2" cy="15.4" r="1" fill="#fff6c0" stroke="#b8900c" stroke-width="0.3"/><line x1="16.2" y1="22.0" x2="22.0" y2="22.0" stroke="#bcbcbc" stroke-width="0.6"/><rect x="22.6" y="19.0" width="6.2" height="6.2" rx="0.9" fill="url(#yg)" stroke="#c09c1c" stroke-width="0.55"/><path d="M24.7 23.7c0.4-1.2 0.6-2.6 1.8-3.2M24.2 21.7h2.6" fill="none" stroke="#7a6010" stroke-width="0.6"/><circle cx="27.2" cy="23.8" r="1" fill="#fff6c0" stroke="#b8900c" stroke-width="0.3"/><line x1="16.2" y1="30.5" x2="22.0" y2="30.5" stroke="#bcbcbc" stroke-width="0.6"/><rect x="22.6" y="27.5" width="6.2" height="6.2" rx="0.9" fill="url(#yg)" stroke="#c09c1c" stroke-width="0.55"/><path d="M24.7 32.2c0.4-1.2 0.6-2.6 1.8-3.2M24.2 30.2h2.6" fill="none" stroke="#7a6010" stroke-width="0.6"/><circle cx="27.2" cy="32.3" r="1" fill="#fff6c0" stroke="#b8900c" stroke-width="0.3"/><line x1="16.2" y1="39.0" x2="22.0" y2="39.0" stroke="#bcbcbc" stroke-width="0.6"/><rect x="22.6" y="36.0" width="6.2" height="6.2" rx="0.9" fill="url(#yg)" stroke="#c09c1c" stroke-width="0.55"/><path d="M24.7 40.7c0.4-1.2 0.6-2.6 1.8-3.2M24.2 38.7h2.6" fill="none" stroke="#7a6010" stroke-width="0.6"/><circle cx="27.2" cy="40.8" r="1" fill="#fff6c0" stroke="#b8900c" stroke-width="0.3"/><line x1="16.2" y1="47.5" x2="22.0" y2="47.5" stroke="#bcbcbc" stroke-width="0.6"/><rect x="22.6" y="44.5" width="6.2" height="6.2" rx="0.9" fill="url(#yg)" stroke="#c09c1c" stroke-width="0.55"/><path d="M24.7 49.2c0.4-1.2 0.6-2.6 1.8-3.2M24.2 47.2h2.6" fill="none" stroke="#7a6010" stroke-width="0.6"/><circle cx="27.2" cy="49.3" r="1" fill="#fff6c0" stroke="#b8900c" stroke-width="0.3"/><line x1="16.2" y1="55.9" x2="22.0" y2="55.9" stroke="#bcbcbc" stroke-width="0.6"/><rect x="22.6" y="52.9" width="6.2" height="6.2" rx="0.9" fill="url(#yg)" stroke="#c09c1c" stroke-width="0.55"/><path d="M24.7 57.6c0.4-1.2 0.6-2.6 1.8-3.2M24.2 55.6h2.6" fill="none" stroke="#7a6010" stroke-width="0.6"/><circle cx="27.2" cy="57.7" r="1" fill="#fff6c0" stroke="#b8900c" stroke-width="0.3"/><line x1="16.2" y1="64.4" x2="22.0" y2="64.4" stroke="#bcbcbc" stroke-width="0.6"/><rect x="22.6" y="61.4" width="6.2" height="6.2" rx="0.9" fill="url(#yg)" stroke="#c09c1c" stroke-width="0.55"/><path d="M24.7 66.1c0.4-1.2 0.6-2.6 1.8-3.2M24.2 64.1h2.6" fill="none" stroke="#7a6010" stroke-width="0.6"/><circle cx="27.2" cy="66.2" r="1" fill="#fff6c0" stroke="#b8900c" stroke-width="0.3"/><line x1="16.2" y1="72.9" x2="22.0" y2="72.9" stroke="#bcbcbc" stroke-width="0.6"/><rect x="22.6" y="69.9" width="6.2" height="6.2" rx="0.9" fill="url(#yg)" stroke="#c09c1c" stroke-width="0.55"/><path d="M24.7 74.6c0.4-1.2 0.6-2.6 1.8-3.2M24.2 72.6h2.6" fill="none" stroke="#7a6010" stroke-width="0.6"/><circle cx="27.2" cy="74.7" r="1" fill="#fff6c0" stroke="#b8900c" stroke-width="0.3"/><line x1="16.2" y1="81.4" x2="22.0" y2="81.4" stroke="#bcbcbc" stroke-width="0.6"/><rect x="22.6" y="78.4" width="6.2" height="6.2" rx="0.9" fill="url(#yg)" stroke="#c09c1c" stroke-width="0.55"/><path d="M24.7 83.1c0.4-1.2 0.6-2.6 1.8-3.2M24.2 81.1h2.6" fill="none" stroke="#7a6010" stroke-width="0.6"/><circle cx="27.2" cy="83.2" r="1" fill="#fff6c0" stroke="#b8900c" stroke-width="0.3"/><line x1="16.2" y1="89.8" x2="22.0" y2="89.8" stroke="#bcbcbc" stroke-width="0.6"/><rect x="22.6" y="86.8" width="6.2" height="6.2" rx="0.9" fill="url(#yg)" stroke="#c09c1c" stroke-width="0.55"/><path d="M24.7 91.5c0.4-1.2 0.6-2.6 1.8-3.2M24.2 89.5h2.6" fill="none" stroke="#7a6010" stroke-width="0.6"/><circle cx="27.2" cy="91.6" r="1" fill="#fff6c0" stroke="#b8900c" stroke-width="0.3"/><line x1="16.2" y1="98.3" x2="22.0" y2="98.3" stroke="#bcbcbc" stroke-width="0.6"/><rect x="22.6" y="95.3" width="6.2" height="6.2" rx="0.9" fill="url(#yg)" stroke="#c09c1c" stroke-width="0.55"/><path d="M24.7 100.0c0.4-1.2 0.6-2.6 1.8-3.2M24.2 98.0h2.6" fill="none" stroke="#7a6010" stroke-width="0.6"/><circle cx="27.2" cy="100.1" r="1" fill="#fff6c0" stroke="#b8900c" stroke-width="0.3"/><line x1="16.2" y1="106.8" x2="22.0" y2="106.8" stroke="#bcbcbc" stroke-width="0.6"/><rect x="22.6" y="103.8" width="6.2" height="6.2" rx="0.9" fill="url(#yg)" stroke="#c09c1c" stroke-width="0.55"/><path d="M24.7 108.5c0.4-1.2 0.6-2.6 1.8-3.2M24.2 106.5h2.6" fill="none" stroke="#7a6010" stroke-width="0.6"/><circle cx="27.2" cy="108.6" r="1" fill="#fff6c0" stroke="#b8900c" stroke-width="0.3"/><line x1="16.2" y1="115.3" x2="22.0" y2="115.3" stroke="#bcbcbc" stroke-width="0.6"/><rect x="22.6" y="112.3" width="6.2" height="6.2" rx="0.9" fill="url(#yg)" stroke="#c09c1c" stroke-width="0.55"/><path d="M24.7 117.0c0.4-1.2 0.6-2.6 1.8-3.2M24.2 115.0h2.6" fill="none" stroke="#7a6010" stroke-width="0.6"/><circle cx="27.2" cy="117.1" r="1" fill="#fff6c0" stroke="#b8900c" stroke-width="0.3"/><line x1="16.2" y1="123.8" x2="22.0" y2="123.8" stroke="#bcbcbc" stroke-width="0.6"/><rect x="22.6" y="120.8" width="6.2" height="6.2" rx="0.9" fill="url(#yg)" stroke="#c09c1c" stroke-width="0.55"/><path d="M24.7 125.5c0.4-1.2 0.6-2.6 1.8-3.2M24.2 123.5h2.6" fill="none" stroke="#7a6010" stroke-width="0.6"/><circle cx="27.2" cy="125.5" r="1" fill="#fff6c0" stroke="#b8900c" stroke-width="0.3"/><line x1="16.2" y1="132.2" x2="22.0" y2="132.2" stroke="#bcbcbc" stroke-width="0.6"/><rect x="22.6" y="129.2" width="6.2" height="6.2" rx="0.9" fill="url(#yg)" stroke="#c09c1c" stroke-width="0.55"/><path d="M24.7 133.9c0.4-1.2 0.6-2.6 1.8-3.2M24.2 131.9h2.6" fill="none" stroke="#7a6010" stroke-width="0.6"/><circle cx="27.2" cy="134.0" r="1" fill="#fff6c0" stroke="#b8900c" stroke-width="0.3"/><line x1="16.2" y1="140.7" x2="22.0" y2="140.7" stroke="#bcbcbc" stroke-width="0.6"/><rect x="22.6" y="137.7" width="6.2" height="6.2" rx="0.9" fill="url(#yg)" stroke="#c09c1c" stroke-width="0.55"/><path d="M24.7 142.4c0.4-1.2 0.6-2.6 1.8-3.2M24.2 140.4h2.6" fill="none" stroke="#7a6010" stroke-width="0.6"/><circle cx="27.2" cy="142.5" r="1" fill="#fff6c0" stroke="#b8900c" stroke-width="0.3"/><line x1="6.0" y1="149.2" x2="12.5" y2="149.2" stroke="#bcbcbc" stroke-width="0.6"/><rect x="4.00" y="147.17" width="4" height="4" fill="#fff" stroke="#9a9a9a" stroke-width="0.55"/><line x1="4.90" y1="149.17" x2="7.10" y2="149.17" stroke="#222" stroke-width="0.6"/><rect x="12.4" y="146.2" width="7" height="6" fill="#fff" stroke="#2a5ad0" stroke-width="0.7"/><rect x="12.4" y="146.2" width="7" height="1.5" fill="#2a5ad0"/><path d="M13.6 150.8l1.3-2 1.2 1.6 1.4-2.2" fill="none" stroke="#2a5ad0" stroke-width="0.6"/><line x1="16.2" y1="157.6" x2="22.0" y2="157.6" stroke="#bcbcbc" stroke-width="0.6"/><rect x="22.6" y="154.6" width="6.2" height="6.2" rx="0.9" fill="url(#yg)" stroke="#c09c1c" stroke-width="0.55"/><path d="M24.7 159.3c0.4-1.2 0.6-2.6 1.8-3.2M24.2 157.3h2.6" fill="none" stroke="#7a6010" stroke-width="0.6"/><circle cx="27.2" cy="159.4" r="1" fill="#fff6c0" stroke="#b8900c" stroke-width="0.3"/><line x1="16.2" y1="166.1" x2="22.0" y2="166.1" stroke="#bcbcbc" stroke-width="0.6"/><rect x="22.6" y="163.1" width="6.2" height="6.2" rx="0.9" fill="url(#yg)" stroke="#c09c1c" stroke-width="0.55"/><path d="M24.7 167.8c0.4-1.2 0.6-2.6 1.8-3.2M24.2 165.8h2.6" fill="none" stroke="#7a6010" stroke-width="0.6"/><circle cx="27.2" cy="167.9" r="1" fill="#fff6c0" stroke="#b8900c" stroke-width="0.3"/><line x1="16.2" y1="174.6" x2="22.0" y2="174.6" stroke="#bcbcbc" stroke-width="0.6"/><rect x="22.6" y="171.6" width="6.2" height="6.2" rx="0.9" fill="url(#yg)" stroke="#c09c1c" stroke-width="0.55"/><path d="M24.7 176.3c0.4-1.2 0.6-2.6 1.8-3.2M24.2 174.3h2.6" fill="none" stroke="#7a6010" stroke-width="0.6"/><circle cx="27.2" cy="176.4" r="1" fill="#fff6c0" stroke="#b8900c" stroke-width="0.3"/><line x1="6.0" y1="183.1" x2="12.5" y2="183.1" stroke="#bcbcbc" stroke-width="0.6"/><rect x="4.00" y="181.07" width="4" height="4" fill="#fff" stroke="#9a9a9a" stroke-width="0.55"/><line x1="4.90" y1="183.07" x2="7.10" y2="183.07" stroke="#222" stroke-width="0.6"/><rect x="12.4" y="180.1" width="7" height="6" fill="#fff" stroke="#2a5ad0" stroke-width="0.7"/><rect x="12.4" y="180.1" width="7" height="1.5" fill="#2a5ad0"/><path d="M13.6 184.7l1.3-2 1.2 1.6 1.4-2.2" fill="none" stroke="#2a5ad0" stroke-width="0.6"/><line x1="16.2" y1="191.5" x2="22.0" y2="191.5" stroke="#bcbcbc" stroke-width="0.6"/><rect x="22.6" y="188.5" width="6.2" height="6.2" rx="0.9" fill="url(#yg)" stroke="#c09c1c" stroke-width="0.55"/><path d="M24.7 193.2c0.4-1.2 0.6-2.6 1.8-3.2M24.2 191.2h2.6" fill="none" stroke="#7a6010" stroke-width="0.6"/><circle cx="27.2" cy="193.3" r="1" fill="#fff6c0" stroke="#b8900c" stroke-width="0.3"/><line x1="16.2" y1="200.0" x2="22.0" y2="200.0" stroke="#bcbcbc" stroke-width="0.6"/><rect x="22.6" y="197.0" width="6.2" height="6.2" rx="0.9" fill="url(#yg)" stroke="#c09c1c" stroke-width="0.55"/><path d="M24.7 201.7c0.4-1.2 0.6-2.6 1.8-3.2M24.2 199.7h2.6" fill="none" stroke="#7a6010" stroke-width="0.6"/><circle cx="27.2" cy="201.8" r="1" fill="#fff6c0" stroke="#b8900c" stroke-width="0.3"/><line x1="6.0" y1="208.5" x2="12.5" y2="208.5" stroke="#bcbcbc" stroke-width="0.6"/><rect x="4.00" y="206.50" width="4" height="4" fill="#fff" stroke="#9a9a9a" stroke-width="0.55"/><line x1="4.90" y1="208.50" x2="7.10" y2="208.50" stroke="#222" stroke-width="0.6"/><rect x="12.4" y="205.5" width="7" height="6" fill="#fff" stroke="#2a5ad0" stroke-width="0.7"/><rect x="12.4" y="205.5" width="7" height="1.5" fill="#2a5ad0"/><path d="M13.6 210.1l1.3-2 1.2 1.6 1.4-2.2" fill="none" stroke="#2a5ad0" stroke-width="0.6"/><line x1="16.2" y1="217.0" x2="22.0" y2="217.0" stroke="#bcbcbc" stroke-width="0.6"/><rect x="22.6" y="214.0" width="6.2" height="6.2" rx="0.9" fill="url(#yg)" stroke="#c09c1c" stroke-width="0.55"/><path d="M24.7 218.7c0.4-1.2 0.6-2.6 1.8-3.2M24.2 216.7h2.6" fill="none" stroke="#7a6010" stroke-width="0.6"/><circle cx="27.2" cy="218.8" r="1" fill="#fff6c0" stroke="#b8900c" stroke-width="0.3"/></svg>
<div class="abs" style="left:0;top:302px;width:153.6px;height:8px;background:#f0f0f0"></div>
<div class="abs" style="left:8.8px;top:302px;width:116px;height:8px;background:#c2c2c2"></div>
<svg style="position:absolute;left:0;top:302px" width="154" height="8" viewBox="0 0 154 8"><path d="M5 2.2L3.2 4 5 5.8M148.6 2.2L150.4 4 148.6 5.8" fill="none" stroke="#333" stroke-width="1"/></svg>
</div>
<div class="btn" style="top:19.2px;background:#cdcdcd;color:#8a8a8a;border:0.5px solid #c0c0c0"><u>E</u>dit</div>
<div class="btn" style="top:32.1px;background:#cdcdcd;color:#8a8a8a;border:0.5px solid #c0c0c0"><u>D</u>elete</div>
<div class="btn" style="top:320.2px;background:#e1e1e1;color:#111;border:0.8px solid #0078d7"><u>C</u>lose</div>
</div>
<svg style="position:absolute;left:664.6px;top:309.6px" width="10.8" height="16.8" viewBox="0 0 9 14"><path d="M0.6 0.8V10.6L2.9 8.5 4.6 12.4 6.2 11.7 4.6 7.9H7.6Z" fill="#fff" stroke="#222" stroke-width="0.55" stroke-linejoin="round"/></svg>
</div></body></html>
